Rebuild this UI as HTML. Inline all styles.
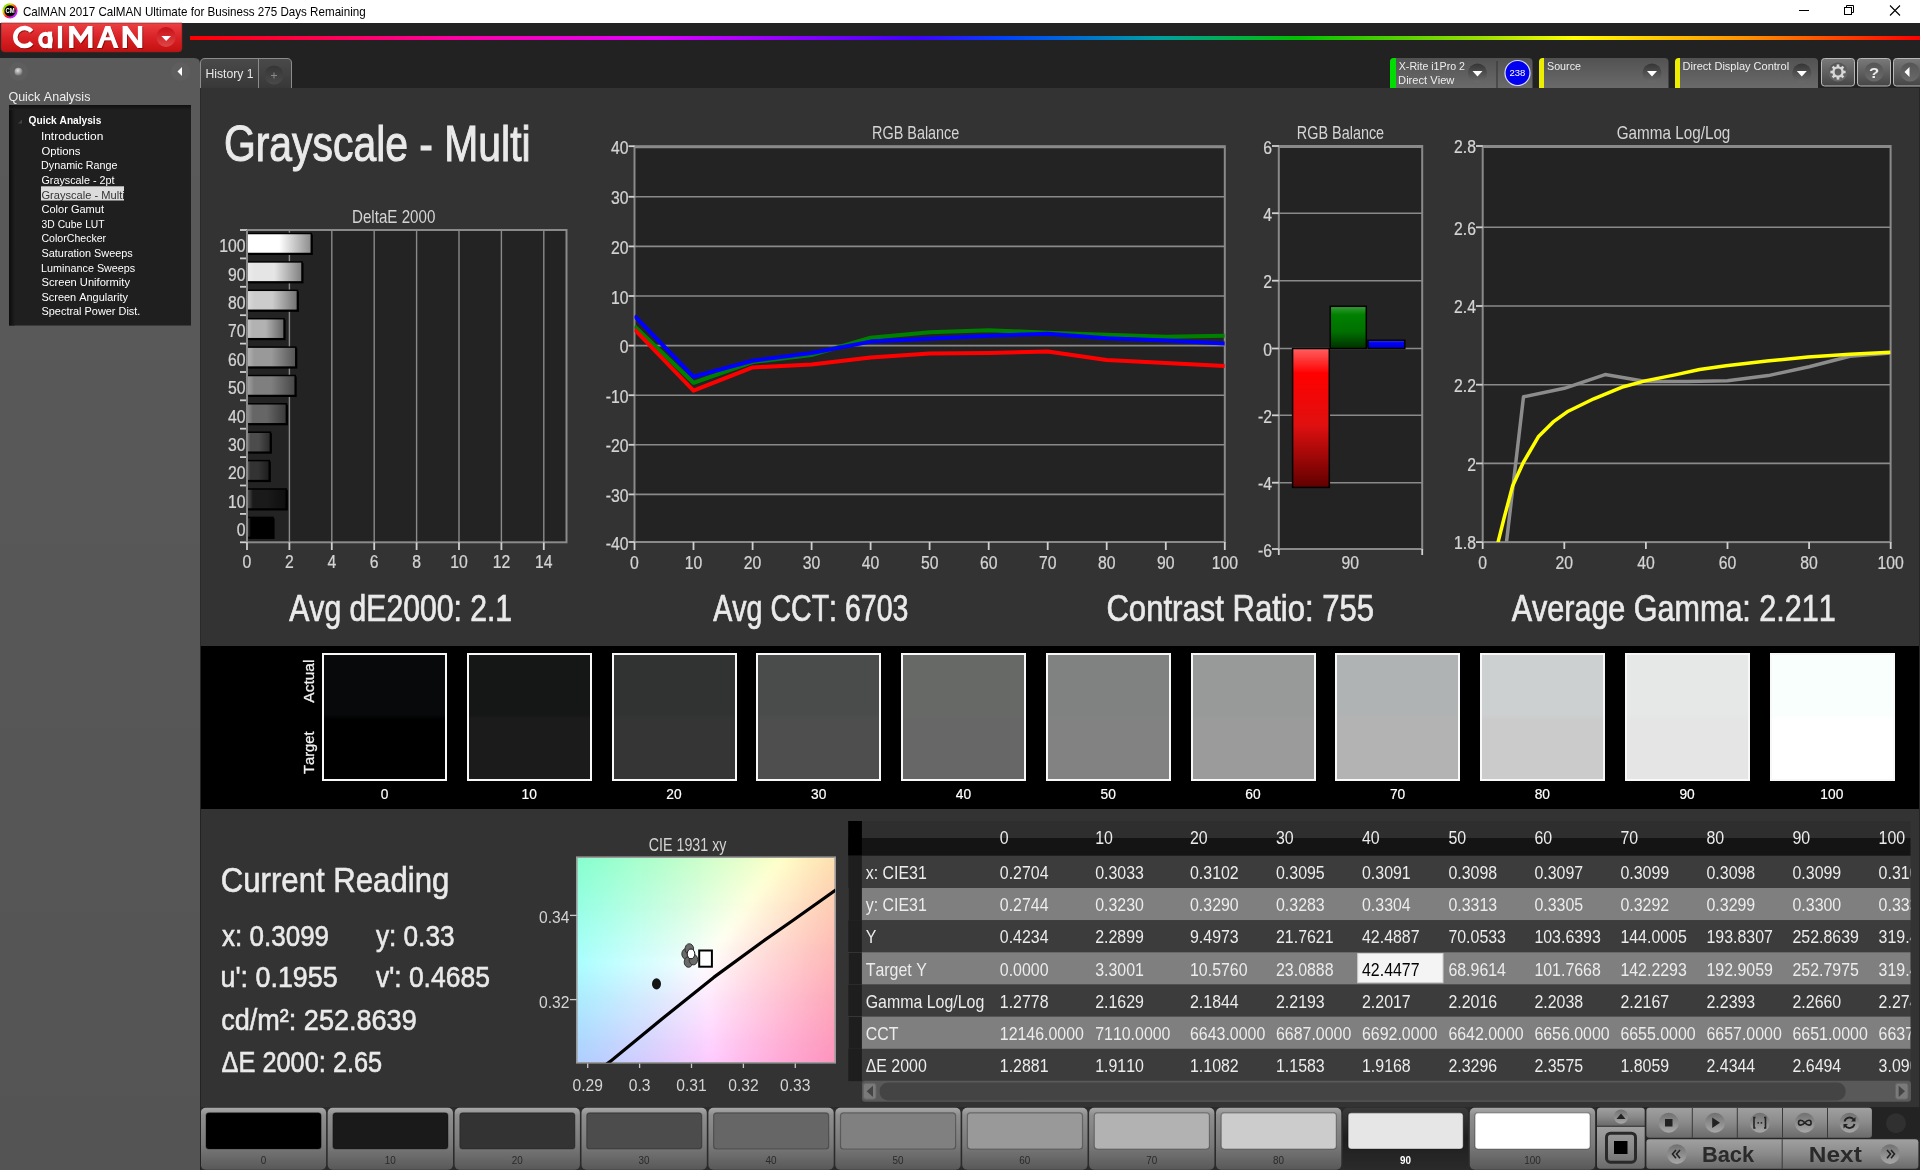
<!DOCTYPE html>
<html><head><meta charset="utf-8"><title>CalMAN</title>
<style>html,body{margin:0;padding:0;background:#222;overflow:hidden}svg{display:block;will-change:transform}text{font-family:"Liberation Sans",sans-serif;font-kerning:none}</style>
</head><body>
<svg width="1920" height="1170" viewBox="0 0 1920 1170" font-family="Liberation Sans, sans-serif">
<defs><linearGradient id="g1" x1="0" y1="0" x2="1" y2="1"><stop offset="0" stop-color="#00e000"/><stop offset="0.3" stop-color="#e0e000"/><stop offset="0.55" stop-color="#ff2020"/><stop offset="0.8" stop-color="#c020ff"/><stop offset="1" stop-color="#00c0ff"/></linearGradient><linearGradient id="g2" x1="0" y1="0" x2="0" y2="1"><stop offset="0" stop-color="#ec4144"/><stop offset="0.5" stop-color="#d92226"/><stop offset="1" stop-color="#c41010"/></linearGradient><linearGradient id="g3" x1="0" y1="0" x2="0" y2="1"><stop offset="0" stop-color="#c80f18"/><stop offset="1" stop-color="#e04545"/></linearGradient><linearGradient id="g4" x1="0" y1="0" x2="1" y2="0"><stop offset="0" stop-color="#ff0000"/><stop offset="0.15" stop-color="#ff00a0"/><stop offset="0.27" stop-color="#e000ff"/><stop offset="0.42" stop-color="#4000ff"/><stop offset="0.47" stop-color="#0040ff"/><stop offset="0.56" stop-color="#00a0a0"/><stop offset="0.64" stop-color="#00c000"/><stop offset="0.75" stop-color="#a0e000"/><stop offset="0.8" stop-color="#ffff00"/><stop offset="0.9" stop-color="#ff9000"/><stop offset="1" stop-color="#ff0000"/></linearGradient><linearGradient id="g5" x1="0" y1="0" x2="0" y2="1"><stop offset="0" stop-color="#5a5a5a"/><stop offset="1" stop-color="#545454"/></linearGradient><radialGradient id="g6" cx="0.42" cy="0.35" r="0.65"><stop offset="0" stop-color="#e0e0e0"/><stop offset="0.5" stop-color="#a8a8a8"/><stop offset="1" stop-color="#6e6e6e"/></radialGradient><radialGradient id="g7" cx="0.5" cy="0.5" r="0.5"><stop offset="0" stop-color="#5a5a5a"/><stop offset="0.7" stop-color="#5c5c5c"/><stop offset="1" stop-color="#575757"/></radialGradient><linearGradient id="g8" x1="0" y1="0" x2="1" y2="0"><stop offset="0" stop-color="#0c0c0c"/><stop offset="1" stop-color="#1f1f1f"/></linearGradient><linearGradient id="g9" x1="0" y1="0" x2="0" y2="1"><stop offset="0" stop-color="#0c0c0c"/><stop offset="1" stop-color="#1f1f1f"/></linearGradient><linearGradient id="g10" x1="0" y1="0" x2="0" y2="1"><stop offset="0" stop-color="#4a4a4a"/><stop offset="1" stop-color="#383838"/></linearGradient><linearGradient id="g11" x1="0" y1="0" x2="0" y2="1"><stop offset="0" stop-color="#353535"/><stop offset="1" stop-color="#4a4a4a"/></linearGradient><linearGradient id="g12" x1="0" y1="0" x2="0" y2="1"><stop offset="0" stop-color="#525252"/><stop offset="1" stop-color="#6a6a6a"/></linearGradient><linearGradient id="g13" x1="0" y1="0" x2="0" y2="1"><stop offset="0" stop-color="#353535"/><stop offset="1" stop-color="#6a6a6a"/></linearGradient><linearGradient id="g14" x1="0" y1="0" x2="0" y2="1"><stop offset="0" stop-color="#353535"/><stop offset="1" stop-color="#6a6a6a"/></linearGradient><linearGradient id="g15" x1="0" y1="0" x2="0" y2="1"><stop offset="0" stop-color="#353535"/><stop offset="1" stop-color="#6a6a6a"/></linearGradient><linearGradient id="g16" x1="0" y1="0" x2="0" y2="1"><stop offset="0" stop-color="#7a7a7a"/><stop offset="1" stop-color="#454545"/></linearGradient><linearGradient id="g17" x1="0" y1="0" x2="0" y2="1"><stop offset="0" stop-color="#555"/><stop offset="1" stop-color="#6a6a6a"/></linearGradient><linearGradient id="g18" x1="0" y1="0" x2="0" y2="1"><stop offset="0" stop-color="#555"/><stop offset="1" stop-color="#6a6a6a"/></linearGradient><linearGradient id="g19" x1="0" y1="0" x2="0" y2="1"><stop offset="0" stop-color="#555"/><stop offset="1" stop-color="#6a6a6a"/></linearGradient><linearGradient id="g20" x1="0" y1="0" x2="1" y2="0"><stop offset="0" stop-color="#ffffff"/><stop offset="0.15" stop-color="#ffffff"/><stop offset="0.5" stop-color="#ffffff"/><stop offset="1" stop-color="#8c8c8c"/></linearGradient><linearGradient id="g21" x1="0" y1="0" x2="1" y2="0"><stop offset="0" stop-color="#ececec"/><stop offset="0.15" stop-color="#e5e5e5"/><stop offset="0.5" stop-color="#e5e5e5"/><stop offset="1" stop-color="#7e7e7e"/></linearGradient><linearGradient id="g22" x1="0" y1="0" x2="1" y2="0"><stop offset="0" stop-color="#dadada"/><stop offset="0.15" stop-color="#cccccc"/><stop offset="0.5" stop-color="#cccccc"/><stop offset="1" stop-color="#707070"/></linearGradient><linearGradient id="g23" x1="0" y1="0" x2="1" y2="0"><stop offset="0" stop-color="#c7c7c7"/><stop offset="0.15" stop-color="#b2b2b2"/><stop offset="0.5" stop-color="#b2b2b2"/><stop offset="1" stop-color="#626262"/></linearGradient><linearGradient id="g24" x1="0" y1="0" x2="1" y2="0"><stop offset="0" stop-color="#b5b5b5"/><stop offset="0.15" stop-color="#999999"/><stop offset="0.5" stop-color="#999999"/><stop offset="1" stop-color="#545454"/></linearGradient><linearGradient id="g25" x1="0" y1="0" x2="1" y2="0"><stop offset="0" stop-color="#a2a2a2"/><stop offset="0.15" stop-color="#7f7f7f"/><stop offset="0.5" stop-color="#7f7f7f"/><stop offset="1" stop-color="#464646"/></linearGradient><linearGradient id="g26" x1="0" y1="0" x2="1" y2="0"><stop offset="0" stop-color="#909090"/><stop offset="0.15" stop-color="#666666"/><stop offset="0.5" stop-color="#666666"/><stop offset="1" stop-color="#383838"/></linearGradient><linearGradient id="g27" x1="0" y1="0" x2="1" y2="0"><stop offset="0" stop-color="#7d7d7d"/><stop offset="0.15" stop-color="#4c4c4c"/><stop offset="0.5" stop-color="#4c4c4c"/><stop offset="1" stop-color="#2a2a2a"/></linearGradient><linearGradient id="g28" x1="0" y1="0" x2="1" y2="0"><stop offset="0" stop-color="#6b6b6b"/><stop offset="0.15" stop-color="#333333"/><stop offset="0.5" stop-color="#333333"/><stop offset="1" stop-color="#1c1c1c"/></linearGradient><linearGradient id="g29" x1="0" y1="0" x2="1" y2="0"><stop offset="0" stop-color="#595959"/><stop offset="0.15" stop-color="#1a1a1a"/><stop offset="0.5" stop-color="#1a1a1a"/><stop offset="1" stop-color="#0e0e0e"/></linearGradient><linearGradient id="g30" x1="0" y1="0" x2="1" y2="0"><stop offset="0" stop-color="#464646"/><stop offset="0.15" stop-color="#000000"/><stop offset="0.5" stop-color="#000000"/><stop offset="1" stop-color="#000000"/></linearGradient><linearGradient id="g31" x1="0" y1="0" x2="0" y2="1"><stop offset="0" stop-color="#ff6060"/><stop offset="0.18" stop-color="#ff0000"/><stop offset="0.55" stop-color="#e01010"/><stop offset="1" stop-color="#600000"/></linearGradient><linearGradient id="g32" x1="0" y1="0" x2="0" y2="1"><stop offset="0" stop-color="#3a9a3a"/><stop offset="0.2" stop-color="#008000"/><stop offset="0.6" stop-color="#007000"/><stop offset="1" stop-color="#003000"/></linearGradient><linearGradient id="g33" x1="0" y1="0" x2="0" y2="1"><stop offset="0" stop-color="#4040ff"/><stop offset="0.3" stop-color="#0000ff"/><stop offset="1" stop-color="#0000c0"/></linearGradient><linearGradient id="g34" x1="0" y1="0" x2="0" y2="1"><stop offset="0" stop-color="#08090b"/><stop offset="0.48" stop-color="#08090b"/><stop offset="0.52" stop-color="#000000"/><stop offset="1" stop-color="#000000"/></linearGradient><linearGradient id="g35" x1="0" y1="0" x2="0" y2="1"><stop offset="0" stop-color="#151716"/><stop offset="0.48" stop-color="#151716"/><stop offset="0.52" stop-color="#1b1b1b"/><stop offset="1" stop-color="#1b1b1b"/></linearGradient><linearGradient id="g36" x1="0" y1="0" x2="0" y2="1"><stop offset="0" stop-color="#313332"/><stop offset="0.48" stop-color="#313332"/><stop offset="0.52" stop-color="#353535"/><stop offset="1" stop-color="#353535"/></linearGradient><linearGradient id="g37" x1="0" y1="0" x2="0" y2="1"><stop offset="0" stop-color="#4a4c4b"/><stop offset="0.48" stop-color="#4a4c4b"/><stop offset="0.52" stop-color="#4e4e4e"/><stop offset="1" stop-color="#4e4e4e"/></linearGradient><linearGradient id="g38" x1="0" y1="0" x2="0" y2="1"><stop offset="0" stop-color="#676967"/><stop offset="0.48" stop-color="#676967"/><stop offset="0.52" stop-color="#676767"/><stop offset="1" stop-color="#676767"/></linearGradient><linearGradient id="g39" x1="0" y1="0" x2="0" y2="1"><stop offset="0" stop-color="#7f8281"/><stop offset="0.48" stop-color="#7f8281"/><stop offset="0.52" stop-color="#828282"/><stop offset="1" stop-color="#828282"/></linearGradient><linearGradient id="g40" x1="0" y1="0" x2="0" y2="1"><stop offset="0" stop-color="#979a99"/><stop offset="0.48" stop-color="#979a99"/><stop offset="0.52" stop-color="#9b9b9b"/><stop offset="1" stop-color="#9b9b9b"/></linearGradient><linearGradient id="g41" x1="0" y1="0" x2="0" y2="1"><stop offset="0" stop-color="#b0b3b3"/><stop offset="0.48" stop-color="#b0b3b3"/><stop offset="0.52" stop-color="#b3b3b3"/><stop offset="1" stop-color="#b3b3b3"/></linearGradient><linearGradient id="g42" x1="0" y1="0" x2="0" y2="1"><stop offset="0" stop-color="#cdd0d0"/><stop offset="0.48" stop-color="#cdd0d0"/><stop offset="0.52" stop-color="#cbcbcb"/><stop offset="1" stop-color="#cbcbcb"/></linearGradient><linearGradient id="g43" x1="0" y1="0" x2="0" y2="1"><stop offset="0" stop-color="#e5e8e7"/><stop offset="0.48" stop-color="#e5e8e7"/><stop offset="0.52" stop-color="#e5e5e5"/><stop offset="1" stop-color="#e5e5e5"/></linearGradient><linearGradient id="g44" x1="0" y1="0" x2="0" y2="1"><stop offset="0" stop-color="#f8fffd"/><stop offset="0.48" stop-color="#f8fffd"/><stop offset="0.52" stop-color="#ffffff"/><stop offset="1" stop-color="#ffffff"/></linearGradient><filter id="blur" filterUnits="userSpaceOnUse" x="540" y="820" width="330" height="280"><feGaussianBlur stdDeviation="4"/></filter><linearGradient id="g45" x1="0" y1="0" x2="0" y2="1"><stop offset="0" stop-color="#2e2e2e"/><stop offset="0.5" stop-color="#2e2e2e"/><stop offset="0.5" stop-color="#141414"/><stop offset="1" stop-color="#141414"/></linearGradient><linearGradient id="g46" x1="0" y1="0" x2="0" y2="1"><stop offset="0" stop-color="#a8a8a8"/><stop offset="0.12" stop-color="#8e8e8e"/><stop offset="0.6" stop-color="#7a7a7a"/><stop offset="1" stop-color="#585858"/></linearGradient><linearGradient id="g47" x1="0" y1="0" x2="0" y2="1"><stop offset="0" stop-color="#3a3a3a"/><stop offset="0.5" stop-color="#1e1e1e"/><stop offset="1" stop-color="#2a2a2a"/></linearGradient><linearGradient id="g48" x1="0" y1="0" x2="0" y2="1"><stop offset="0" stop-color="#a0a0a0"/><stop offset="0.5" stop-color="#8a8a8a"/><stop offset="1" stop-color="#6a6a6a"/></linearGradient><linearGradient id="g49" x1="0" y1="0" x2="0" y2="1"><stop offset="0" stop-color="#707070"/><stop offset="1" stop-color="#a8a8a8"/></linearGradient></defs>
<rect x="0" y="0" width="1920" height="1170" fill="#222222"/>
<rect x="0" y="0" width="1920" height="23" fill="#ffffff"/>
<rect x="200" y="88" width="1720" height="1082" fill="#333333"/>
<circle cx="10" cy="10.9" r="7.6" fill="url(#g1)"/>
<circle cx="10" cy="10.9" r="5.6" fill="#000"/>
<text transform="translate(5.51,13.20) scale(0.9036,1)" font-size="6.5" fill="#fff" font-weight="bold">CM</text>
<text transform="translate(22.91,15.60) scale(0.9695,1)" font-size="12" fill="#000">CalMAN 2017 CalMAN Ultimate for Business 275 Days Remaining</text>
<line x1="1799" y1="10.5" x2="1809" y2="10.5" stroke="#000" stroke-width="1"/>
<rect x="1844.5" y="7.5" width="7" height="7" fill="none" stroke="#000" stroke-width="1"/>
<path d="M1846.5 7.5 V5.5 H1853.5 V12.5 H1851.5" fill="none" stroke="#000" stroke-width="1"/>
<path d="M1890 5.5 L1900 15.5 M1900 5.5 L1890 15.5" stroke="#000" stroke-width="1.1"/>
<path d="M1 23 H182 V48 Q182 52 178 52 H5 Q1 52 1 48 Z" fill="url(#g2)" stroke="#7a2a2a" stroke-width="0.6"/>
<g transform="translate(0.9,0.9)" fill="#5a0000" stroke="#5a0000" opacity="0.55"><path d="M31.6 31.4 A9.2 9 0 1 0 31.6 42.8" fill="none" stroke-width="4.5"/><ellipse cx="45.5" cy="40.05" rx="5.2" ry="6.1" fill="none" stroke-width="4.2"/><rect x="47.8" y="31.6" width="4.4" height="16.7" stroke="none"/><rect x="57.9" y="25.9" width="4.3" height="22.4" stroke="none"/><path d="M69.1 48.1 V26.1 H73.9 L80.8 36.3 L87.7 26.1 H92.5 V48.1 H88.1 V33.6 L80.8 43.6 L73.5 33.6 V48.1 Z" stroke="none"/><path d="M96.9 48.1 L105.3 26.1 H110.3 L118.6 48.1 H113.9 L107.8 31.6 L101.6 48.1 Z" stroke="none"/><rect x="102" y="37.2" width="11.6" height="3.2" stroke="none"/><path d="M122.6 48.1 V26.1 H127.3 L137.9 40.6 V26.1 H142.3 V48.1 H137.6 L127 33.7 V48.1 Z" stroke="none"/></g>
<g fill="#ffffff" stroke="#ffffff"><path d="M31.6 31.4 A9.2 9 0 1 0 31.6 42.8" fill="none" stroke-width="4.5"/><ellipse cx="45.5" cy="40.05" rx="5.2" ry="6.1" fill="none" stroke-width="4.2"/><rect x="47.8" y="31.6" width="4.4" height="16.7" stroke="none"/><rect x="57.9" y="25.9" width="4.3" height="22.4" stroke="none"/><path d="M69.1 48.1 V26.1 H73.9 L80.8 36.3 L87.7 26.1 H92.5 V48.1 H88.1 V33.6 L80.8 43.6 L73.5 33.6 V48.1 Z" stroke="none"/><path d="M96.9 48.1 L105.3 26.1 H110.3 L118.6 48.1 H113.9 L107.8 31.6 L101.6 48.1 Z" stroke="none"/><rect x="102" y="37.2" width="11.6" height="3.2" stroke="none"/><path d="M122.6 48.1 V26.1 H127.3 L137.9 40.6 V26.1 H142.3 V48.1 H137.6 L127 33.7 V48.1 Z" stroke="none"/></g>
<ellipse cx="166" cy="36.9" rx="9.6" ry="10" fill="url(#g3)"/>
<path d="M161.4 36 H171 L166.2 40.9 Z" fill="#fff"/>
<rect x="190" y="36" width="1730" height="4" fill="url(#g4)"/>
<path d="M0 58 H194 Q200 58 200 64 V1170 H0 Z" fill="url(#g5)"/>
<circle cx="18.5" cy="71.5" r="9.5" fill="#5e5e5e"/>
<circle cx="18.5" cy="71.7" r="4" fill="url(#g6)"/>
<circle cx="180.5" cy="71.5" r="9.5" fill="#5e5e5e"/>
<path d="M177.5 71.5 L182 67 V76 Z" fill="#ffffff"/>
<text transform="translate(8.41,101.00) scale(0.9624,1)" font-size="13" fill="#eeeeee">Quick Analysis</text>
<rect x="9" y="105" width="182" height="220.5" fill="#1f1f1f"/>
<rect x="9" y="105" width="6" height="220.5" fill="url(#g8)"/>
<rect x="9" y="105" width="182" height="5" fill="url(#g9)" opacity="0.8"/>
<path d="M18 123.5 L22 119.5 V123.5 Z" fill="#444"/>
<text transform="translate(28.58,123.80) scale(0.8833,1)" font-size="11.5" fill="#ffffff" font-weight="bold">Quick Analysis</text>
<text transform="translate(40.90,140.20) scale(1.0380,1)" font-size="11.5" fill="#ffffff">Introduction</text>
<text transform="translate(41.46,154.80) scale(0.9826,1)" font-size="11.5" fill="#ffffff">Options</text>
<text transform="translate(41.12,169.40) scale(0.9333,1)" font-size="11.5" fill="#ffffff">Dynamic Range</text>
<text transform="translate(41.46,184.00) scale(0.9378,1)" font-size="11.5" fill="#ffffff">Grayscale - 2pt</text>
<rect x="41" y="186.3" width="83" height="14.2" fill="#dcdcdc"/>
<text transform="translate(41.44,198.60) scale(0.9657,1)" font-size="11.5" fill="#333333">Grayscale - Multi</text>
<text transform="translate(41.44,213.20) scale(0.9610,1)" font-size="11.5" fill="#ffffff">Color Gamut</text>
<text transform="translate(41.61,227.80) scale(0.8979,1)" font-size="11.5" fill="#ffffff">3D Cube LUT</text>
<text transform="translate(41.46,242.40) scale(0.9205,1)" font-size="11.5" fill="#ffffff">ColorChecker</text>
<text transform="translate(41.51,257.00) scale(0.9467,1)" font-size="11.5" fill="#ffffff">Saturation Sweeps</text>
<text transform="translate(41.11,271.60) scale(0.9393,1)" font-size="11.5" fill="#ffffff">Luminance Sweeps</text>
<text transform="translate(41.49,286.20) scale(0.9687,1)" font-size="11.5" fill="#ffffff">Screen Uniformity</text>
<text transform="translate(41.50,300.80) scale(0.9532,1)" font-size="11.5" fill="#ffffff">Screen Angularity</text>
<text transform="translate(41.50,315.40) scale(0.9503,1)" font-size="11.5" fill="#ffffff">Spectral Power Dist.</text>
<path d="M200.5 88 V63 Q200.5 58.5 205 58.5 H287 Q291.5 58.5 291.5 63 V88" fill="url(#g10)" stroke="#8c8c8c" stroke-width="1"/>
<line x1="258.5" y1="59" x2="258.5" y2="88" stroke="#8c8c8c" stroke-width="1"/>
<text transform="translate(205.50,77.80) scale(1.0159,1)" font-size="12" fill="#e8e8e8">History 1</text>
<circle cx="274" cy="75" r="9.5" fill="url(#g11)"/>
<path d="M271 75.5 H277 M274 72.5 V78.5" stroke="#8a8a8a" stroke-width="1"/>
<path d="M1390 88 V62 Q1390 58 1394 58 H1528.5 Q1532.5 58 1532.5 62 V88 Z" fill="url(#g12)"/>
<path d="M1390 88 V62 Q1390 58 1394 58 H1396 V88 Z" fill="#00dd00"/>
<text transform="translate(1398.76,70.00) scale(0.9679,1)" font-size="11" fill="#eeeeee">X-Rite i1Pro 2</text>
<text transform="translate(1398.09,83.70) scale(1.0137,1)" font-size="11" fill="#eeeeee">Direct View</text>
<circle cx="1477.5" cy="73" r="9.5" fill="url(#g13)"/>
<path d="M1472.5 71 H1482.5 L1477.5 76.5 Z" fill="#fff"/>
<line x1="1497" y1="61" x2="1497" y2="88" stroke="#3a3a3a" stroke-width="1.2"/>
<circle cx="1517.5" cy="73" r="12.5" fill="#0000ee" stroke="#dcdcff" stroke-width="1.2"/>
<text transform="translate(1509.52,76.30) scale(1.0584,1)" font-size="9" fill="#ffffff">238</text>
<path d="M1539 88 V62 Q1539 58 1543 58 H1664.5 Q1668.5 58 1668.5 62 V88 Z" fill="url(#g12)"/>
<path d="M1539 88 V62 Q1539 58 1543 58 H1544 V88 Z" fill="#eeee00"/>
<text transform="translate(1547.01,70.00) scale(0.9745,1)" font-size="11" fill="#eeeeee">Source</text>
<circle cx="1652" cy="73" r="9.5" fill="url(#g14)"/>
<path d="M1647 71 H1657 L1652 76.5 Z" fill="#fff"/>
<path d="M1675 88 V62 Q1675 58 1679 58 H1814 Q1818 58 1818 62 V88 Z" fill="url(#g12)"/>
<path d="M1675 88 V62 Q1675 58 1679 58 H1680 V88 Z" fill="#eeee00"/>
<text transform="translate(1682.60,70.00) scale(1.0026,1)" font-size="11" fill="#eeeeee">Direct Display Control</text>
<circle cx="1801.8" cy="73" r="9.5" fill="url(#g15)"/>
<path d="M1796.8 71 H1806.8 L1801.8 76.5 Z" fill="#fff"/>
<rect x="1821.5" y="58.5" width="33" height="27.5" rx="3" fill="url(#g16)" stroke="#b8b8b8" stroke-width="1"/>
<circle cx="1838" cy="72" r="9.6" fill="url(#g17)"/>
<rect x="1857.5" y="58.5" width="33" height="27.5" rx="3" fill="url(#g16)" stroke="#b8b8b8" stroke-width="1"/>
<circle cx="1874" cy="72" r="9.6" fill="url(#g18)"/>
<rect x="1893.5" y="58.5" width="33" height="27.5" rx="3" fill="url(#g16)" stroke="#b8b8b8" stroke-width="1"/>
<circle cx="1910" cy="72" r="9.6" fill="url(#g19)"/>
<rect x="1836.7" y="64.4" width="2.6" height="3.4" fill="#d8d8d8" transform="rotate(0 1838 72)"/><rect x="1836.7" y="64.4" width="2.6" height="3.4" fill="#d8d8d8" transform="rotate(45 1838 72)"/><rect x="1836.7" y="64.4" width="2.6" height="3.4" fill="#d8d8d8" transform="rotate(90 1838 72)"/><rect x="1836.7" y="64.4" width="2.6" height="3.4" fill="#d8d8d8" transform="rotate(135 1838 72)"/><rect x="1836.7" y="64.4" width="2.6" height="3.4" fill="#d8d8d8" transform="rotate(180 1838 72)"/><rect x="1836.7" y="64.4" width="2.6" height="3.4" fill="#d8d8d8" transform="rotate(225 1838 72)"/><rect x="1836.7" y="64.4" width="2.6" height="3.4" fill="#d8d8d8" transform="rotate(270 1838 72)"/><rect x="1836.7" y="64.4" width="2.6" height="3.4" fill="#d8d8d8" transform="rotate(315 1838 72)"/>
<circle cx="1838" cy="72" r="4.6" fill="none" stroke="#d8d8d8" stroke-width="2.4"/>
<text transform="translate(1868.98,77.50) scale(1.1170,1)" font-size="15" fill="#eeeeee" font-weight="bold">?</text>
<path d="M1904.5 72 L1909.5 67 V77 Z" fill="#ffffff"/>
<text transform="translate(223.94,161.40) scale(0.8180,1)" font-size="50" fill="#eaeaea" stroke="#eaeaea" stroke-width="1.0">Grayscale - Multi</text>
<text transform="translate(352.01,223.30) scale(0.8652,1)" font-size="17.5" fill="#d4d4d4">DeltaE 2000</text>
<rect x="247" y="230" width="319.5" height="312.29999999999995" fill="#232323"/>
<line x1="289.4" y1="230" x2="289.4" y2="542.3" stroke="#8a8a8a" stroke-width="1.4"/>
<line x1="331.8" y1="230" x2="331.8" y2="542.3" stroke="#8a8a8a" stroke-width="1.4"/>
<line x1="374.2" y1="230" x2="374.2" y2="542.3" stroke="#8a8a8a" stroke-width="1.4"/>
<line x1="416.6" y1="230" x2="416.6" y2="542.3" stroke="#8a8a8a" stroke-width="1.4"/>
<line x1="459.0" y1="230" x2="459.0" y2="542.3" stroke="#8a8a8a" stroke-width="1.4"/>
<line x1="501.4" y1="230" x2="501.4" y2="542.3" stroke="#8a8a8a" stroke-width="1.4"/>
<line x1="543.8" y1="230" x2="543.8" y2="542.3" stroke="#8a8a8a" stroke-width="1.4"/>
<rect x="247" y="230" width="319.5" height="312.29999999999995" fill="none" stroke="#8a8a8a" stroke-width="2"/>
<line x1="240" y1="230.0" x2="247" y2="230.0" stroke="#d0d0d0" stroke-width="1.8"/>
<line x1="240" y1="258.4" x2="247" y2="258.4" stroke="#d0d0d0" stroke-width="1.8"/>
<line x1="240" y1="286.8" x2="247" y2="286.8" stroke="#d0d0d0" stroke-width="1.8"/>
<line x1="240" y1="315.2" x2="247" y2="315.2" stroke="#d0d0d0" stroke-width="1.8"/>
<line x1="240" y1="343.6" x2="247" y2="343.6" stroke="#d0d0d0" stroke-width="1.8"/>
<line x1="240" y1="372.0" x2="247" y2="372.0" stroke="#d0d0d0" stroke-width="1.8"/>
<line x1="240" y1="400.3" x2="247" y2="400.3" stroke="#d0d0d0" stroke-width="1.8"/>
<line x1="240" y1="428.7" x2="247" y2="428.7" stroke="#d0d0d0" stroke-width="1.8"/>
<line x1="240" y1="457.1" x2="247" y2="457.1" stroke="#d0d0d0" stroke-width="1.8"/>
<line x1="240" y1="485.5" x2="247" y2="485.5" stroke="#d0d0d0" stroke-width="1.8"/>
<line x1="240" y1="513.9" x2="247" y2="513.9" stroke="#d0d0d0" stroke-width="1.8"/>
<line x1="240" y1="542.3" x2="247" y2="542.3" stroke="#d0d0d0" stroke-width="1.8"/>
<rect x="248.5" y="234.5" width="64.3" height="20.5" fill="#000"/>
<rect x="247" y="233.5" width="64.3" height="20" fill="url(#g20)" stroke="#000" stroke-width="1.5"/>
<text transform="translate(245.50,252.20) scale(0.9000,1)" font-size="17.5" fill="#d4d4d4" text-anchor="end" stroke="#d4d4d4" stroke-width="0.25">100</text>
<rect x="248.5" y="262.9" width="55.0" height="20.5" fill="#000"/>
<rect x="247" y="261.9" width="55.0" height="20" fill="url(#g21)" stroke="#000" stroke-width="1.5"/>
<text transform="translate(245.50,280.59) scale(0.9000,1)" font-size="17.5" fill="#d4d4d4" text-anchor="end" stroke="#d4d4d4" stroke-width="0.25">90</text>
<rect x="248.5" y="291.3" width="50.4" height="20.5" fill="#000"/>
<rect x="247" y="290.3" width="50.4" height="20" fill="url(#g22)" stroke="#000" stroke-width="1.5"/>
<text transform="translate(245.50,308.98) scale(0.9000,1)" font-size="17.5" fill="#d4d4d4" text-anchor="end" stroke="#d4d4d4" stroke-width="0.25">80</text>
<rect x="248.5" y="319.7" width="37.1" height="20.5" fill="#000"/>
<rect x="247" y="318.7" width="37.1" height="20" fill="url(#g23)" stroke="#000" stroke-width="1.5"/>
<text transform="translate(245.50,337.37) scale(0.9000,1)" font-size="17.5" fill="#d4d4d4" text-anchor="end" stroke="#d4d4d4" stroke-width="0.25">70</text>
<rect x="248.5" y="348.1" width="48.8" height="20.5" fill="#000"/>
<rect x="247" y="347.1" width="48.8" height="20" fill="url(#g24)" stroke="#000" stroke-width="1.5"/>
<text transform="translate(245.50,365.76) scale(0.9000,1)" font-size="17.5" fill="#d4d4d4" text-anchor="end" stroke="#d4d4d4" stroke-width="0.25">60</text>
<rect x="248.5" y="376.5" width="48.2" height="20.5" fill="#000"/>
<rect x="247" y="375.5" width="48.2" height="20" fill="url(#g25)" stroke="#000" stroke-width="1.5"/>
<text transform="translate(245.50,394.15) scale(0.9000,1)" font-size="17.5" fill="#d4d4d4" text-anchor="end" stroke="#d4d4d4" stroke-width="0.25">50</text>
<rect x="248.5" y="404.8" width="39.4" height="20.5" fill="#000"/>
<rect x="247" y="403.8" width="39.4" height="20" fill="url(#g26)" stroke="#000" stroke-width="1.5"/>
<text transform="translate(245.50,422.54) scale(0.9000,1)" font-size="17.5" fill="#d4d4d4" text-anchor="end" stroke="#d4d4d4" stroke-width="0.25">40</text>
<rect x="248.5" y="433.2" width="23.4" height="20.5" fill="#000"/>
<rect x="247" y="432.2" width="23.4" height="20" fill="url(#g27)" stroke="#000" stroke-width="1.5"/>
<text transform="translate(245.50,450.93) scale(0.9000,1)" font-size="17.5" fill="#d4d4d4" text-anchor="end" stroke="#d4d4d4" stroke-width="0.25">30</text>
<rect x="248.5" y="461.6" width="22.3" height="20.5" fill="#000"/>
<rect x="247" y="460.6" width="22.3" height="20" fill="url(#g28)" stroke="#000" stroke-width="1.5"/>
<text transform="translate(245.50,479.32) scale(0.9000,1)" font-size="17.5" fill="#d4d4d4" text-anchor="end" stroke="#d4d4d4" stroke-width="0.25">20</text>
<rect x="248.5" y="490.0" width="39.3" height="20.5" fill="#000"/>
<rect x="247" y="489.0" width="39.3" height="20" fill="url(#g29)" stroke="#000" stroke-width="1.5"/>
<text transform="translate(245.50,507.71) scale(0.9000,1)" font-size="17.5" fill="#d4d4d4" text-anchor="end" stroke="#d4d4d4" stroke-width="0.25">10</text>
<rect x="248.5" y="518.4" width="26.1" height="20.5" fill="#000"/>
<rect x="247" y="517.4" width="26.1" height="20" fill="url(#g30)" stroke="#000" stroke-width="1.5"/>
<text transform="translate(245.50,536.10) scale(0.9000,1)" font-size="17.5" fill="#d4d4d4" text-anchor="end" stroke="#d4d4d4" stroke-width="0.25">0</text>
<line x1="247" y1="230" x2="247" y2="542.3" stroke="#8a8a8a" stroke-width="2"/>
<line x1="247.0" y1="542.3" x2="247.0" y2="550" stroke="#d0d0d0" stroke-width="1.8"/>
<text transform="translate(247.00,568.00) scale(0.9000,1)" font-size="17.5" fill="#d4d4d4" text-anchor="middle" stroke="#d4d4d4" stroke-width="0.25">0</text>
<line x1="289.4" y1="542.3" x2="289.4" y2="550" stroke="#d0d0d0" stroke-width="1.8"/>
<text transform="translate(289.40,568.00) scale(0.9000,1)" font-size="17.5" fill="#d4d4d4" text-anchor="middle" stroke="#d4d4d4" stroke-width="0.25">2</text>
<line x1="331.8" y1="542.3" x2="331.8" y2="550" stroke="#d0d0d0" stroke-width="1.8"/>
<text transform="translate(331.80,568.00) scale(0.9000,1)" font-size="17.5" fill="#d4d4d4" text-anchor="middle" stroke="#d4d4d4" stroke-width="0.25">4</text>
<line x1="374.2" y1="542.3" x2="374.2" y2="550" stroke="#d0d0d0" stroke-width="1.8"/>
<text transform="translate(374.20,568.00) scale(0.9000,1)" font-size="17.5" fill="#d4d4d4" text-anchor="middle" stroke="#d4d4d4" stroke-width="0.25">6</text>
<line x1="416.6" y1="542.3" x2="416.6" y2="550" stroke="#d0d0d0" stroke-width="1.8"/>
<text transform="translate(416.60,568.00) scale(0.9000,1)" font-size="17.5" fill="#d4d4d4" text-anchor="middle" stroke="#d4d4d4" stroke-width="0.25">8</text>
<line x1="459.0" y1="542.3" x2="459.0" y2="550" stroke="#d0d0d0" stroke-width="1.8"/>
<text transform="translate(459.00,568.00) scale(0.9000,1)" font-size="17.5" fill="#d4d4d4" text-anchor="middle" stroke="#d4d4d4" stroke-width="0.25">10</text>
<line x1="501.4" y1="542.3" x2="501.4" y2="550" stroke="#d0d0d0" stroke-width="1.8"/>
<text transform="translate(501.40,568.00) scale(0.9000,1)" font-size="17.5" fill="#d4d4d4" text-anchor="middle" stroke="#d4d4d4" stroke-width="0.25">12</text>
<line x1="543.8" y1="542.3" x2="543.8" y2="550" stroke="#d0d0d0" stroke-width="1.8"/>
<text transform="translate(543.80,568.00) scale(0.9000,1)" font-size="17.5" fill="#d4d4d4" text-anchor="middle" stroke="#d4d4d4" stroke-width="0.25">14</text>
<text transform="translate(872.07,139.00) scale(0.8236,1)" font-size="17.5" fill="#d4d4d4">RGB Balance</text>
<rect x="634.5" y="146.2" width="590.3" height="395.8" fill="#232323"/>
<line x1="634.5" y1="494.4" x2="1224.8" y2="494.4" stroke="#8a8a8a" stroke-width="1.6"/>
<line x1="634.5" y1="444.8" x2="1224.8" y2="444.8" stroke="#8a8a8a" stroke-width="1.6"/>
<line x1="634.5" y1="395.2" x2="1224.8" y2="395.2" stroke="#8a8a8a" stroke-width="1.6"/>
<line x1="634.5" y1="345.6" x2="1224.8" y2="345.6" stroke="#8a8a8a" stroke-width="1.6"/>
<line x1="634.5" y1="296.0" x2="1224.8" y2="296.0" stroke="#8a8a8a" stroke-width="1.6"/>
<line x1="634.5" y1="246.4" x2="1224.8" y2="246.4" stroke="#8a8a8a" stroke-width="1.6"/>
<line x1="634.5" y1="196.8" x2="1224.8" y2="196.8" stroke="#8a8a8a" stroke-width="1.6"/>
<rect x="634.5" y="146.2" width="590.3" height="395.8" fill="none" stroke="#8a8a8a" stroke-width="2"/>
<line x1="634.5" y1="147.2" x2="1224.8" y2="147.2" stroke="#8a8a8a" stroke-width="2"/>
<line x1="628.5" y1="542.0" x2="634.5" y2="542.0" stroke="#d0d0d0" stroke-width="1.8"/>
<text transform="translate(628.50,549.50) scale(0.9000,1)" font-size="17.5" fill="#d4d4d4" text-anchor="end" stroke="#d4d4d4" stroke-width="0.25">-40</text>
<line x1="628.5" y1="494.4" x2="634.5" y2="494.4" stroke="#d0d0d0" stroke-width="1.8"/>
<text transform="translate(628.50,501.90) scale(0.9000,1)" font-size="17.5" fill="#d4d4d4" text-anchor="end" stroke="#d4d4d4" stroke-width="0.25">-30</text>
<line x1="628.5" y1="444.8" x2="634.5" y2="444.8" stroke="#d0d0d0" stroke-width="1.8"/>
<text transform="translate(628.50,452.30) scale(0.9000,1)" font-size="17.5" fill="#d4d4d4" text-anchor="end" stroke="#d4d4d4" stroke-width="0.25">-20</text>
<line x1="628.5" y1="395.2" x2="634.5" y2="395.2" stroke="#d0d0d0" stroke-width="1.8"/>
<text transform="translate(628.50,402.70) scale(0.9000,1)" font-size="17.5" fill="#d4d4d4" text-anchor="end" stroke="#d4d4d4" stroke-width="0.25">-10</text>
<line x1="628.5" y1="345.6" x2="634.5" y2="345.6" stroke="#d0d0d0" stroke-width="1.8"/>
<text transform="translate(628.50,353.10) scale(0.9000,1)" font-size="17.5" fill="#d4d4d4" text-anchor="end" stroke="#d4d4d4" stroke-width="0.25">0</text>
<line x1="628.5" y1="296.0" x2="634.5" y2="296.0" stroke="#d0d0d0" stroke-width="1.8"/>
<text transform="translate(628.50,303.50) scale(0.9000,1)" font-size="17.5" fill="#d4d4d4" text-anchor="end" stroke="#d4d4d4" stroke-width="0.25">10</text>
<line x1="628.5" y1="246.4" x2="634.5" y2="246.4" stroke="#d0d0d0" stroke-width="1.8"/>
<text transform="translate(628.50,253.90) scale(0.9000,1)" font-size="17.5" fill="#d4d4d4" text-anchor="end" stroke="#d4d4d4" stroke-width="0.25">20</text>
<line x1="628.5" y1="196.8" x2="634.5" y2="196.8" stroke="#d0d0d0" stroke-width="1.8"/>
<text transform="translate(628.50,204.30) scale(0.9000,1)" font-size="17.5" fill="#d4d4d4" text-anchor="end" stroke="#d4d4d4" stroke-width="0.25">30</text>
<line x1="628.5" y1="146.2" x2="634.5" y2="146.2" stroke="#d0d0d0" stroke-width="1.8"/>
<text transform="translate(628.50,153.70) scale(0.9000,1)" font-size="17.5" fill="#d4d4d4" text-anchor="end" stroke="#d4d4d4" stroke-width="0.25">40</text>
<line x1="634.5" y1="542" x2="634.5" y2="550" stroke="#d0d0d0" stroke-width="1.8"/>
<text transform="translate(634.50,569.00) scale(0.9000,1)" font-size="17.5" fill="#d4d4d4" text-anchor="middle" stroke="#d4d4d4" stroke-width="0.25">0</text>
<line x1="693.5" y1="542" x2="693.5" y2="550" stroke="#d0d0d0" stroke-width="1.8"/>
<text transform="translate(693.53,569.00) scale(0.9000,1)" font-size="17.5" fill="#d4d4d4" text-anchor="middle" stroke="#d4d4d4" stroke-width="0.25">10</text>
<line x1="752.6" y1="542" x2="752.6" y2="550" stroke="#d0d0d0" stroke-width="1.8"/>
<text transform="translate(752.56,569.00) scale(0.9000,1)" font-size="17.5" fill="#d4d4d4" text-anchor="middle" stroke="#d4d4d4" stroke-width="0.25">20</text>
<line x1="811.6" y1="542" x2="811.6" y2="550" stroke="#d0d0d0" stroke-width="1.8"/>
<text transform="translate(811.59,569.00) scale(0.9000,1)" font-size="17.5" fill="#d4d4d4" text-anchor="middle" stroke="#d4d4d4" stroke-width="0.25">30</text>
<line x1="870.6" y1="542" x2="870.6" y2="550" stroke="#d0d0d0" stroke-width="1.8"/>
<text transform="translate(870.62,569.00) scale(0.9000,1)" font-size="17.5" fill="#d4d4d4" text-anchor="middle" stroke="#d4d4d4" stroke-width="0.25">40</text>
<line x1="929.6" y1="542" x2="929.6" y2="550" stroke="#d0d0d0" stroke-width="1.8"/>
<text transform="translate(929.65,569.00) scale(0.9000,1)" font-size="17.5" fill="#d4d4d4" text-anchor="middle" stroke="#d4d4d4" stroke-width="0.25">50</text>
<line x1="988.7" y1="542" x2="988.7" y2="550" stroke="#d0d0d0" stroke-width="1.8"/>
<text transform="translate(988.68,569.00) scale(0.9000,1)" font-size="17.5" fill="#d4d4d4" text-anchor="middle" stroke="#d4d4d4" stroke-width="0.25">60</text>
<line x1="1047.7" y1="542" x2="1047.7" y2="550" stroke="#d0d0d0" stroke-width="1.8"/>
<text transform="translate(1047.71,569.00) scale(0.9000,1)" font-size="17.5" fill="#d4d4d4" text-anchor="middle" stroke="#d4d4d4" stroke-width="0.25">70</text>
<line x1="1106.7" y1="542" x2="1106.7" y2="550" stroke="#d0d0d0" stroke-width="1.8"/>
<text transform="translate(1106.74,569.00) scale(0.9000,1)" font-size="17.5" fill="#d4d4d4" text-anchor="middle" stroke="#d4d4d4" stroke-width="0.25">80</text>
<line x1="1165.8" y1="542" x2="1165.8" y2="550" stroke="#d0d0d0" stroke-width="1.8"/>
<text transform="translate(1165.77,569.00) scale(0.9000,1)" font-size="17.5" fill="#d4d4d4" text-anchor="middle" stroke="#d4d4d4" stroke-width="0.25">90</text>
<line x1="1224.8" y1="542" x2="1224.8" y2="550" stroke="#d0d0d0" stroke-width="1.8"/>
<text transform="translate(1224.80,569.00) scale(0.9000,1)" font-size="17.5" fill="#d4d4d4" text-anchor="middle" stroke="#d4d4d4" stroke-width="0.25">100</text>
<clipPath id="cq"><rect x="634.5" y="146.2" width="590.3" height="395.8"/></clipPath>
<polyline points="634.5,326.3 693.5,382.8 752.6,362.0 811.6,355.0 870.6,337.7 929.6,332.2 988.7,330.2 1047.7,332.7 1106.7,334.7 1165.8,336.7 1224.8,335.7" fill="none" stroke="#008000" stroke-width="4" stroke-linejoin="round" clip-path="url(#cq)"/>
<polyline points="634.5,315.8 693.5,376.8 752.6,360.7 811.6,353.0 870.6,341.6 929.6,338.7 988.7,335.7 1047.7,333.7 1106.7,338.2 1165.8,340.6 1224.8,343.6" fill="none" stroke="#0000ff" stroke-width="4" stroke-linejoin="round" clip-path="url(#cq)"/>
<polyline points="634.5,329.5 693.5,390.7 752.6,367.4 811.6,364.4 870.6,357.5 929.6,353.5 988.7,353.0 1047.7,351.6 1106.7,360.0 1165.8,363.0 1224.8,365.9" fill="none" stroke="#ff0000" stroke-width="4" stroke-linejoin="round" clip-path="url(#cq)"/>
<text transform="translate(1296.87,139.00) scale(0.8236,1)" font-size="17.5" fill="#d4d4d4">RGB Balance</text>
<rect x="1278.8" y="146" width="143.4000000000001" height="403" fill="#232323"/>
<line x1="1278.8" y1="213.2" x2="1422.2" y2="213.2" stroke="#8a8a8a" stroke-width="1.6"/>
<line x1="1278.8" y1="280.7" x2="1422.2" y2="280.7" stroke="#8a8a8a" stroke-width="1.6"/>
<line x1="1278.8" y1="348.5" x2="1422.2" y2="348.5" stroke="#8a8a8a" stroke-width="1.6"/>
<line x1="1278.8" y1="415.3" x2="1422.2" y2="415.3" stroke="#8a8a8a" stroke-width="1.6"/>
<line x1="1278.8" y1="482.7" x2="1422.2" y2="482.7" stroke="#8a8a8a" stroke-width="1.6"/>
<rect x="1278.8" y="146" width="143.4000000000001" height="403" fill="none" stroke="#8a8a8a" stroke-width="2"/>
<line x1="1278.8" y1="147" x2="1422.2" y2="147" stroke="#8a8a8a" stroke-width="2"/>
<line x1="1272" y1="146" x2="1278.8" y2="146" stroke="#d0d0d0" stroke-width="1.8"/>
<text transform="translate(1272.00,153.50) scale(0.9000,1)" font-size="17.5" fill="#d4d4d4" text-anchor="end" stroke="#d4d4d4" stroke-width="0.25">6</text>
<line x1="1272" y1="213.2" x2="1278.8" y2="213.2" stroke="#d0d0d0" stroke-width="1.8"/>
<text transform="translate(1272.00,220.70) scale(0.9000,1)" font-size="17.5" fill="#d4d4d4" text-anchor="end" stroke="#d4d4d4" stroke-width="0.25">4</text>
<line x1="1272" y1="280.7" x2="1278.8" y2="280.7" stroke="#d0d0d0" stroke-width="1.8"/>
<text transform="translate(1272.00,288.20) scale(0.9000,1)" font-size="17.5" fill="#d4d4d4" text-anchor="end" stroke="#d4d4d4" stroke-width="0.25">2</text>
<line x1="1272" y1="348.5" x2="1278.8" y2="348.5" stroke="#d0d0d0" stroke-width="1.8"/>
<text transform="translate(1272.00,356.00) scale(0.9000,1)" font-size="17.5" fill="#d4d4d4" text-anchor="end" stroke="#d4d4d4" stroke-width="0.25">0</text>
<line x1="1272" y1="415.3" x2="1278.8" y2="415.3" stroke="#d0d0d0" stroke-width="1.8"/>
<text transform="translate(1272.00,422.80) scale(0.9000,1)" font-size="17.5" fill="#d4d4d4" text-anchor="end" stroke="#d4d4d4" stroke-width="0.25">-2</text>
<line x1="1272" y1="482.7" x2="1278.8" y2="482.7" stroke="#d0d0d0" stroke-width="1.8"/>
<text transform="translate(1272.00,490.20) scale(0.9000,1)" font-size="17.5" fill="#d4d4d4" text-anchor="end" stroke="#d4d4d4" stroke-width="0.25">-4</text>
<line x1="1272" y1="549" x2="1278.8" y2="549" stroke="#d0d0d0" stroke-width="1.8"/>
<text transform="translate(1272.00,556.50) scale(0.9000,1)" font-size="17.5" fill="#d4d4d4" text-anchor="end" stroke="#d4d4d4" stroke-width="0.25">-6</text>
<line x1="1278.8" y1="549" x2="1278.8" y2="555" stroke="#d0d0d0" stroke-width="1.8"/>
<line x1="1422.2" y1="549" x2="1422.2" y2="555" stroke="#d0d0d0" stroke-width="1.8"/>
<text transform="translate(1350.30,568.70) scale(0.9000,1)" font-size="17.5" fill="#d4d4d4" text-anchor="middle" stroke="#d4d4d4" stroke-width="0.25">90</text>
<rect x="1292.6" y="348.5" width="36.7" height="138.9" fill="url(#g31)" stroke="#000" stroke-width="1.5"/>
<rect x="1330.3" y="306.3" width="36" height="42.2" fill="url(#g32)" stroke="#000" stroke-width="1.5"/>
<rect x="1368" y="340.3" width="36.8" height="8.2" fill="url(#g33)" stroke="#000" stroke-width="1.5"/>
<text transform="translate(1616.73,139.00) scale(0.8726,1)" font-size="17.5" fill="#d4d4d4">Gamma Log/Log</text>
<rect x="1482.7" y="146" width="407.89999999999986" height="396.1" fill="#232323"/>
<line x1="1482.7" y1="463.4" x2="1890.6" y2="463.4" stroke="#8a8a8a" stroke-width="1.6"/>
<line x1="1482.7" y1="384.7" x2="1890.6" y2="384.7" stroke="#8a8a8a" stroke-width="1.6"/>
<line x1="1482.7" y1="306.0" x2="1890.6" y2="306.0" stroke="#8a8a8a" stroke-width="1.6"/>
<line x1="1482.7" y1="227.3" x2="1890.6" y2="227.3" stroke="#8a8a8a" stroke-width="1.6"/>
<rect x="1482.7" y="146" width="407.89999999999986" height="396.1" fill="none" stroke="#8a8a8a" stroke-width="2"/>
<line x1="1482.7" y1="147" x2="1890.6" y2="147" stroke="#8a8a8a" stroke-width="2"/>
<line x1="1476" y1="542.1" x2="1482.7" y2="542.1" stroke="#d0d0d0" stroke-width="1.8"/>
<text transform="translate(1476.00,549.30) scale(0.9000,1)" font-size="17.5" fill="#d4d4d4" text-anchor="end" stroke="#d4d4d4" stroke-width="0.25">1.8</text>
<line x1="1476" y1="463.4" x2="1482.7" y2="463.4" stroke="#d0d0d0" stroke-width="1.8"/>
<text transform="translate(1476.00,470.60) scale(0.9000,1)" font-size="17.5" fill="#d4d4d4" text-anchor="end" stroke="#d4d4d4" stroke-width="0.25">2</text>
<line x1="1476" y1="384.7" x2="1482.7" y2="384.7" stroke="#d0d0d0" stroke-width="1.8"/>
<text transform="translate(1476.00,391.90) scale(0.9000,1)" font-size="17.5" fill="#d4d4d4" text-anchor="end" stroke="#d4d4d4" stroke-width="0.25">2.2</text>
<line x1="1476" y1="306.0" x2="1482.7" y2="306.0" stroke="#d0d0d0" stroke-width="1.8"/>
<text transform="translate(1476.00,313.20) scale(0.9000,1)" font-size="17.5" fill="#d4d4d4" text-anchor="end" stroke="#d4d4d4" stroke-width="0.25">2.4</text>
<line x1="1476" y1="227.3" x2="1482.7" y2="227.3" stroke="#d0d0d0" stroke-width="1.8"/>
<text transform="translate(1476.00,234.50) scale(0.9000,1)" font-size="17.5" fill="#d4d4d4" text-anchor="end" stroke="#d4d4d4" stroke-width="0.25">2.6</text>
<line x1="1476" y1="146.0" x2="1482.7" y2="146.0" stroke="#d0d0d0" stroke-width="1.8"/>
<text transform="translate(1476.00,153.20) scale(0.9000,1)" font-size="17.5" fill="#d4d4d4" text-anchor="end" stroke="#d4d4d4" stroke-width="0.25">2.8</text>
<line x1="1482.7" y1="542.1" x2="1482.7" y2="549" stroke="#d0d0d0" stroke-width="1.8"/>
<text transform="translate(1482.70,569.00) scale(0.9000,1)" font-size="17.5" fill="#d4d4d4" text-anchor="middle" stroke="#d4d4d4" stroke-width="0.25">0</text>
<line x1="1564.3" y1="542.1" x2="1564.3" y2="549" stroke="#d0d0d0" stroke-width="1.8"/>
<text transform="translate(1564.29,569.00) scale(0.9000,1)" font-size="17.5" fill="#d4d4d4" text-anchor="middle" stroke="#d4d4d4" stroke-width="0.25">20</text>
<line x1="1645.9" y1="542.1" x2="1645.9" y2="549" stroke="#d0d0d0" stroke-width="1.8"/>
<text transform="translate(1645.88,569.00) scale(0.9000,1)" font-size="17.5" fill="#d4d4d4" text-anchor="middle" stroke="#d4d4d4" stroke-width="0.25">40</text>
<line x1="1727.5" y1="542.1" x2="1727.5" y2="549" stroke="#d0d0d0" stroke-width="1.8"/>
<text transform="translate(1727.47,569.00) scale(0.9000,1)" font-size="17.5" fill="#d4d4d4" text-anchor="middle" stroke="#d4d4d4" stroke-width="0.25">60</text>
<line x1="1809.1" y1="542.1" x2="1809.1" y2="549" stroke="#d0d0d0" stroke-width="1.8"/>
<text transform="translate(1809.06,569.00) scale(0.9000,1)" font-size="17.5" fill="#d4d4d4" text-anchor="middle" stroke="#d4d4d4" stroke-width="0.25">80</text>
<line x1="1890.7" y1="542.1" x2="1890.7" y2="549" stroke="#d0d0d0" stroke-width="1.8"/>
<text transform="translate(1890.65,569.00) scale(0.9000,1)" font-size="17.5" fill="#d4d4d4" text-anchor="middle" stroke="#d4d4d4" stroke-width="0.25">100</text>
<clipPath id="cg"><rect x="1482.7" y="146" width="407.89999999999986" height="396.1"/></clipPath>
<polyline points="1482.7,745.1 1523.5,396.8 1564.3,388.3 1605.1,374.6 1645.9,381.5 1686.7,381.6 1727.5,380.7 1768.3,375.6 1809.1,366.7 1849.9,356.2 1890.7,353.1" fill="none" stroke="#8c8c8c" stroke-width="3.5" stroke-linejoin="round" clip-path="url(#cg)"/>
<polyline points="1497.0,548.0 1498.1,542.0 1504.1,518.0 1512.6,486.0 1523.3,462.5 1538.3,436.8 1553.2,421.9 1568.2,411.2 1593.8,398.8 1621.6,387.3 1645.1,380.9 1675.0,374.9 1699.6,369.5 1726.0,365.8 1767.0,361.0 1808.0,357.0 1850.0,354.3 1890.6,352.2" fill="none" stroke="#ffff00" stroke-width="3.5" stroke-linejoin="round" clip-path="url(#cg)"/>
<text transform="translate(289.24,620.70) scale(0.8148,1)" font-size="37" fill="#eaeaea" stroke="#eaeaea" stroke-width="0.7">Avg dE2000: 2.1</text>
<text transform="translate(713.24,620.70) scale(0.7721,1)" font-size="37" fill="#eaeaea" stroke="#eaeaea" stroke-width="0.7">Avg CCT: 6703</text>
<text transform="translate(1106.42,620.70) scale(0.8403,1)" font-size="37" fill="#eaeaea" stroke="#eaeaea" stroke-width="0.7">Contrast Ratio: 755</text>
<text transform="translate(1511.64,620.70) scale(0.8254,1)" font-size="37" fill="#eaeaea" stroke="#eaeaea" stroke-width="0.7">Average Gamma: 2.211</text>
<rect x="200" y="646" width="1720" height="163" fill="#000000"/>
<rect x="323.2" y="654" width="122.7" height="126" fill="url(#g34)"/>
<rect x="323" y="654" width="123" height="126" fill="none" stroke="#f8f8f8" stroke-width="2"/>
<text transform="translate(384.50,798.50) scale(0.9500,1)" font-size="14.5" fill="#ffffff" text-anchor="middle" stroke="#ffffff" stroke-width="0.2">0</text>
<rect x="467.9" y="654" width="122.7" height="126" fill="url(#g35)"/>
<rect x="468" y="654" width="123" height="126" fill="none" stroke="#f8f8f8" stroke-width="2"/>
<text transform="translate(529.23,798.50) scale(0.9500,1)" font-size="14.5" fill="#ffffff" text-anchor="middle" stroke="#ffffff" stroke-width="0.2">10</text>
<rect x="612.7" y="654" width="122.7" height="126" fill="url(#g36)"/>
<rect x="613" y="654" width="123" height="126" fill="none" stroke="#f8f8f8" stroke-width="2"/>
<text transform="translate(673.96,798.50) scale(0.9500,1)" font-size="14.5" fill="#ffffff" text-anchor="middle" stroke="#ffffff" stroke-width="0.2">20</text>
<rect x="757.4" y="654" width="122.7" height="126" fill="url(#g37)"/>
<rect x="757" y="654" width="123" height="126" fill="none" stroke="#f8f8f8" stroke-width="2"/>
<text transform="translate(818.69,798.50) scale(0.9500,1)" font-size="14.5" fill="#ffffff" text-anchor="middle" stroke="#ffffff" stroke-width="0.2">30</text>
<rect x="902.1" y="654" width="122.7" height="126" fill="url(#g38)"/>
<rect x="902" y="654" width="123" height="126" fill="none" stroke="#f8f8f8" stroke-width="2"/>
<text transform="translate(963.42,798.50) scale(0.9500,1)" font-size="14.5" fill="#ffffff" text-anchor="middle" stroke="#ffffff" stroke-width="0.2">40</text>
<rect x="1046.8" y="654" width="122.7" height="126" fill="url(#g39)"/>
<rect x="1047" y="654" width="123" height="126" fill="none" stroke="#f8f8f8" stroke-width="2"/>
<text transform="translate(1108.15,798.50) scale(0.9500,1)" font-size="14.5" fill="#ffffff" text-anchor="middle" stroke="#ffffff" stroke-width="0.2">50</text>
<rect x="1191.6" y="654" width="122.7" height="126" fill="url(#g40)"/>
<rect x="1192" y="654" width="123" height="126" fill="none" stroke="#f8f8f8" stroke-width="2"/>
<text transform="translate(1252.88,798.50) scale(0.9500,1)" font-size="14.5" fill="#ffffff" text-anchor="middle" stroke="#ffffff" stroke-width="0.2">60</text>
<rect x="1336.3" y="654" width="122.7" height="126" fill="url(#g41)"/>
<rect x="1336" y="654" width="123" height="126" fill="none" stroke="#f8f8f8" stroke-width="2"/>
<text transform="translate(1397.61,798.50) scale(0.9500,1)" font-size="14.5" fill="#ffffff" text-anchor="middle" stroke="#ffffff" stroke-width="0.2">70</text>
<rect x="1481.0" y="654" width="122.7" height="126" fill="url(#g42)"/>
<rect x="1481" y="654" width="123" height="126" fill="none" stroke="#f8f8f8" stroke-width="2"/>
<text transform="translate(1542.34,798.50) scale(0.9500,1)" font-size="14.5" fill="#ffffff" text-anchor="middle" stroke="#ffffff" stroke-width="0.2">80</text>
<rect x="1625.8" y="654" width="122.7" height="126" fill="url(#g43)"/>
<rect x="1626" y="654" width="123" height="126" fill="none" stroke="#f8f8f8" stroke-width="2"/>
<text transform="translate(1687.07,798.50) scale(0.9500,1)" font-size="14.5" fill="#ffffff" text-anchor="middle" stroke="#ffffff" stroke-width="0.2">90</text>
<rect x="1770.5" y="654" width="122.7" height="126" fill="url(#g44)"/>
<rect x="1771" y="654" width="123" height="126" fill="none" stroke="#f8f8f8" stroke-width="2"/>
<text transform="translate(1831.80,798.50) scale(0.9500,1)" font-size="14.5" fill="#ffffff" text-anchor="middle" stroke="#ffffff" stroke-width="0.2">100</text>
<text transform="translate(313.8,702.7) rotate(-90) scale(1.0,1)" font-size="15.5" fill="#f0f0f0" stroke="#f0f0f0" stroke-width="0.3">Actual</text>
<text transform="translate(313.8,774) rotate(-90) scale(0.95,1)" font-size="15.5" fill="#f0f0f0" stroke="#f0f0f0" stroke-width="0.3">Target</text>
<text transform="translate(220.72,892.20) scale(0.8909,1)" font-size="35" fill="#eaeaea" stroke="#eaeaea" stroke-width="0.6">Current Reading</text>
<text transform="translate(222.01,945.50) scale(0.8679,1)" font-size="30" fill="#eaeaea" stroke="#eaeaea" stroke-width="0.6">x: 0.3099</text>
<text transform="translate(375.94,945.50) scale(0.8729,1)" font-size="30" fill="#eaeaea" stroke="#eaeaea" stroke-width="0.6">y: 0.33</text>
<text transform="translate(220.56,987.40) scale(0.8948,1)" font-size="30" fill="#eaeaea" stroke="#eaeaea" stroke-width="0.6">u&#x27;: 0.1955</text>
<text transform="translate(375.91,987.40) scale(0.8827,1)" font-size="30" fill="#eaeaea" stroke="#eaeaea" stroke-width="0.6">v&#x27;: 0.4685</text>
<text transform="translate(221.15,1029.70) scale(0.9024,1)" font-size="30" fill="#eaeaea" stroke="#eaeaea" stroke-width="0.6">cd/m²: 252.8639</text>
<text transform="translate(221.54,1072.00) scale(0.8451,1)" font-size="30" fill="#eaeaea" stroke="#eaeaea" stroke-width="0.6">ΔE 2000: 2.65</text>
<text transform="translate(648.78,851.00) scale(0.8156,1)" font-size="17.5" fill="#d4d4d4">CIE 1931 xy</text>
<clipPath id="cc"><rect x="576.8" y="857.2" width="258.4000000000001" height="205.5999999999999"/></clipPath>
<g clip-path="url(#cc)"><g filter="url(#blur)"><rect x="556.9" y="837.6" width="10.5" height="10.4" fill="#7affc8"/><rect x="566.9" y="837.6" width="10.5" height="10.4" fill="#7fffc8"/><rect x="576.8" y="837.6" width="10.5" height="10.4" fill="#84ffc8"/><rect x="586.7" y="837.6" width="10.5" height="10.4" fill="#8affc7"/><rect x="596.7" y="837.6" width="10.5" height="10.4" fill="#8fffc7"/><rect x="606.6" y="837.6" width="10.5" height="10.4" fill="#94ffc7"/><rect x="616.6" y="837.6" width="10.5" height="10.4" fill="#99ffc7"/><rect x="626.5" y="837.6" width="10.5" height="10.4" fill="#9fffc6"/><rect x="636.4" y="837.6" width="10.5" height="10.4" fill="#a4ffc6"/><rect x="646.4" y="837.6" width="10.5" height="10.4" fill="#aaffc6"/><rect x="656.3" y="837.6" width="10.5" height="10.4" fill="#afffc6"/><rect x="666.2" y="837.6" width="10.5" height="10.4" fill="#b5ffc5"/><rect x="676.2" y="837.6" width="10.5" height="10.4" fill="#baffc5"/><rect x="686.1" y="837.6" width="10.5" height="10.4" fill="#c0ffc5"/><rect x="696.1" y="837.6" width="10.5" height="10.4" fill="#c6ffc4"/><rect x="706.0" y="837.6" width="10.5" height="10.4" fill="#ccffc4"/><rect x="715.9" y="837.6" width="10.5" height="10.4" fill="#d2ffc4"/><rect x="725.9" y="837.6" width="10.5" height="10.4" fill="#d8ffc4"/><rect x="735.8" y="837.6" width="10.5" height="10.4" fill="#deffc3"/><rect x="745.8" y="837.6" width="10.5" height="10.4" fill="#e4ffc3"/><rect x="755.7" y="837.6" width="10.5" height="10.4" fill="#eaffc3"/><rect x="765.6" y="837.6" width="10.5" height="10.4" fill="#f0ffc2"/><rect x="775.6" y="837.6" width="10.5" height="10.4" fill="#f6ffc2"/><rect x="785.5" y="837.6" width="10.5" height="10.4" fill="#fcffc2"/><rect x="795.4" y="837.6" width="10.5" height="10.4" fill="#fffbbf"/><rect x="805.4" y="837.6" width="10.5" height="10.4" fill="#fff5ba"/><rect x="815.3" y="837.6" width="10.5" height="10.4" fill="#ffefb5"/><rect x="825.3" y="837.6" width="10.5" height="10.4" fill="#ffeab0"/><rect x="835.2" y="837.6" width="10.5" height="10.4" fill="#ffe4ac"/><rect x="845.1" y="837.6" width="10.5" height="10.4" fill="#ffdfa8"/><rect x="556.9" y="847.4" width="10.5" height="10.4" fill="#7dffcc"/><rect x="566.9" y="847.4" width="10.5" height="10.4" fill="#82ffcc"/><rect x="576.8" y="847.4" width="10.5" height="10.4" fill="#87ffcc"/><rect x="586.7" y="847.4" width="10.5" height="10.4" fill="#8dffcb"/><rect x="596.7" y="847.4" width="10.5" height="10.4" fill="#92ffcb"/><rect x="606.6" y="847.4" width="10.5" height="10.4" fill="#97ffcb"/><rect x="616.6" y="847.4" width="10.5" height="10.4" fill="#9dffcb"/><rect x="626.5" y="847.4" width="10.5" height="10.4" fill="#a2ffca"/><rect x="636.4" y="847.4" width="10.5" height="10.4" fill="#a8ffca"/><rect x="646.4" y="847.4" width="10.5" height="10.4" fill="#adffca"/><rect x="656.3" y="847.4" width="10.5" height="10.4" fill="#b3ffca"/><rect x="666.2" y="847.4" width="10.5" height="10.4" fill="#b8ffc9"/><rect x="676.2" y="847.4" width="10.5" height="10.4" fill="#beffc9"/><rect x="686.1" y="847.4" width="10.5" height="10.4" fill="#c4ffc9"/><rect x="696.1" y="847.4" width="10.5" height="10.4" fill="#caffc9"/><rect x="706.0" y="847.4" width="10.5" height="10.4" fill="#d0ffc8"/><rect x="715.9" y="847.4" width="10.5" height="10.4" fill="#d6ffc8"/><rect x="725.9" y="847.4" width="10.5" height="10.4" fill="#dcffc8"/><rect x="735.8" y="847.4" width="10.5" height="10.4" fill="#e2ffc8"/><rect x="745.8" y="847.4" width="10.5" height="10.4" fill="#e8ffc7"/><rect x="755.7" y="847.4" width="10.5" height="10.4" fill="#eeffc7"/><rect x="765.6" y="847.4" width="10.5" height="10.4" fill="#f4ffc7"/><rect x="775.6" y="847.4" width="10.5" height="10.4" fill="#fbffc6"/><rect x="785.5" y="847.4" width="10.5" height="10.4" fill="#fffdc5"/><rect x="795.4" y="847.4" width="10.5" height="10.4" fill="#fff7bf"/><rect x="805.4" y="847.4" width="10.5" height="10.4" fill="#fff1ba"/><rect x="815.3" y="847.4" width="10.5" height="10.4" fill="#ffebb6"/><rect x="825.3" y="847.4" width="10.5" height="10.4" fill="#ffe5b1"/><rect x="835.2" y="847.4" width="10.5" height="10.4" fill="#ffe0ad"/><rect x="845.1" y="847.4" width="10.5" height="10.4" fill="#ffdba8"/><rect x="556.9" y="857.2" width="10.5" height="10.4" fill="#80ffd0"/><rect x="566.9" y="857.2" width="10.5" height="10.4" fill="#85ffd0"/><rect x="576.8" y="857.2" width="10.5" height="10.4" fill="#8affd0"/><rect x="586.7" y="857.2" width="10.5" height="10.4" fill="#90ffd0"/><rect x="596.7" y="857.2" width="10.5" height="10.4" fill="#95ffcf"/><rect x="606.6" y="857.2" width="10.5" height="10.4" fill="#9affcf"/><rect x="616.6" y="857.2" width="10.5" height="10.4" fill="#a0ffcf"/><rect x="626.5" y="857.2" width="10.5" height="10.4" fill="#a5ffcf"/><rect x="636.4" y="857.2" width="10.5" height="10.4" fill="#abffce"/><rect x="646.4" y="857.2" width="10.5" height="10.4" fill="#b1ffce"/><rect x="656.3" y="857.2" width="10.5" height="10.4" fill="#b6ffce"/><rect x="666.2" y="857.2" width="10.5" height="10.4" fill="#bcffce"/><rect x="676.2" y="857.2" width="10.5" height="10.4" fill="#c2ffcd"/><rect x="686.1" y="857.2" width="10.5" height="10.4" fill="#c8ffcd"/><rect x="696.1" y="857.2" width="10.5" height="10.4" fill="#ceffcd"/><rect x="706.0" y="857.2" width="10.5" height="10.4" fill="#d4ffcd"/><rect x="715.9" y="857.2" width="10.5" height="10.4" fill="#daffcc"/><rect x="725.9" y="857.2" width="10.5" height="10.4" fill="#e0ffcc"/><rect x="735.8" y="857.2" width="10.5" height="10.4" fill="#e6ffcc"/><rect x="745.8" y="857.2" width="10.5" height="10.4" fill="#ecffcc"/><rect x="755.7" y="857.2" width="10.5" height="10.4" fill="#f3ffcb"/><rect x="765.6" y="857.2" width="10.5" height="10.4" fill="#f9ffcb"/><rect x="775.6" y="857.2" width="10.5" height="10.4" fill="#ffffcb"/><rect x="785.5" y="857.2" width="10.5" height="10.4" fill="#fff8c5"/><rect x="795.4" y="857.2" width="10.5" height="10.4" fill="#fff2c0"/><rect x="805.4" y="857.2" width="10.5" height="10.4" fill="#ffecbb"/><rect x="815.3" y="857.2" width="10.5" height="10.4" fill="#ffe7b7"/><rect x="825.3" y="857.2" width="10.5" height="10.4" fill="#ffe1b2"/><rect x="835.2" y="857.2" width="10.5" height="10.4" fill="#ffdcae"/><rect x="845.1" y="857.2" width="10.5" height="10.4" fill="#ffd7a9"/><rect x="556.9" y="867.0" width="10.5" height="10.4" fill="#83ffd4"/><rect x="566.9" y="867.0" width="10.5" height="10.4" fill="#88ffd4"/><rect x="576.8" y="867.0" width="10.5" height="10.4" fill="#8dffd4"/><rect x="586.7" y="867.0" width="10.5" height="10.4" fill="#93ffd4"/><rect x="596.7" y="867.0" width="10.5" height="10.4" fill="#98ffd4"/><rect x="606.6" y="867.0" width="10.5" height="10.4" fill="#9effd3"/><rect x="616.6" y="867.0" width="10.5" height="10.4" fill="#a3ffd3"/><rect x="626.5" y="867.0" width="10.5" height="10.4" fill="#a9ffd3"/><rect x="636.4" y="867.0" width="10.5" height="10.4" fill="#afffd3"/><rect x="646.4" y="867.0" width="10.5" height="10.4" fill="#b4ffd2"/><rect x="656.3" y="867.0" width="10.5" height="10.4" fill="#baffd2"/><rect x="666.2" y="867.0" width="10.5" height="10.4" fill="#c0ffd2"/><rect x="676.2" y="867.0" width="10.5" height="10.4" fill="#c6ffd2"/><rect x="686.1" y="867.0" width="10.5" height="10.4" fill="#ccffd2"/><rect x="696.1" y="867.0" width="10.5" height="10.4" fill="#d2ffd1"/><rect x="706.0" y="867.0" width="10.5" height="10.4" fill="#d8ffd1"/><rect x="715.9" y="867.0" width="10.5" height="10.4" fill="#deffd1"/><rect x="725.9" y="867.0" width="10.5" height="10.4" fill="#e4ffd1"/><rect x="735.8" y="867.0" width="10.5" height="10.4" fill="#eaffd0"/><rect x="745.8" y="867.0" width="10.5" height="10.4" fill="#f1ffd0"/><rect x="755.7" y="867.0" width="10.5" height="10.4" fill="#f7ffd0"/><rect x="765.6" y="867.0" width="10.5" height="10.4" fill="#feffd0"/><rect x="775.6" y="867.0" width="10.5" height="10.4" fill="#fffacb"/><rect x="785.5" y="867.0" width="10.5" height="10.4" fill="#fff4c6"/><rect x="795.4" y="867.0" width="10.5" height="10.4" fill="#ffeec1"/><rect x="805.4" y="867.0" width="10.5" height="10.4" fill="#ffe8bc"/><rect x="815.3" y="867.0" width="10.5" height="10.4" fill="#ffe2b7"/><rect x="825.3" y="867.0" width="10.5" height="10.4" fill="#ffddb3"/><rect x="835.2" y="867.0" width="10.5" height="10.4" fill="#ffd8ae"/><rect x="845.1" y="867.0" width="10.5" height="10.4" fill="#ffd3aa"/><rect x="556.9" y="876.8" width="10.5" height="10.4" fill="#86ffd9"/><rect x="566.9" y="876.8" width="10.5" height="10.4" fill="#8bffd8"/><rect x="576.8" y="876.8" width="10.5" height="10.4" fill="#91ffd8"/><rect x="586.7" y="876.8" width="10.5" height="10.4" fill="#96ffd8"/><rect x="596.7" y="876.8" width="10.5" height="10.4" fill="#9cffd8"/><rect x="606.6" y="876.8" width="10.5" height="10.4" fill="#a1ffd8"/><rect x="616.6" y="876.8" width="10.5" height="10.4" fill="#a7ffd7"/><rect x="626.5" y="876.8" width="10.5" height="10.4" fill="#acffd7"/><rect x="636.4" y="876.8" width="10.5" height="10.4" fill="#b2ffd7"/><rect x="646.4" y="876.8" width="10.5" height="10.4" fill="#b8ffd7"/><rect x="656.3" y="876.8" width="10.5" height="10.4" fill="#beffd7"/><rect x="666.2" y="876.8" width="10.5" height="10.4" fill="#c4ffd6"/><rect x="676.2" y="876.8" width="10.5" height="10.4" fill="#caffd6"/><rect x="686.1" y="876.8" width="10.5" height="10.4" fill="#d0ffd6"/><rect x="696.1" y="876.8" width="10.5" height="10.4" fill="#d6ffd6"/><rect x="706.0" y="876.8" width="10.5" height="10.4" fill="#dcffd6"/><rect x="715.9" y="876.8" width="10.5" height="10.4" fill="#e2ffd5"/><rect x="725.9" y="876.8" width="10.5" height="10.4" fill="#e9ffd5"/><rect x="735.8" y="876.8" width="10.5" height="10.4" fill="#efffd5"/><rect x="745.8" y="876.8" width="10.5" height="10.4" fill="#f5ffd5"/><rect x="755.7" y="876.8" width="10.5" height="10.4" fill="#fcffd5"/><rect x="765.6" y="876.8" width="10.5" height="10.4" fill="#fffcd1"/><rect x="775.6" y="876.8" width="10.5" height="10.4" fill="#fff5cc"/><rect x="785.5" y="876.8" width="10.5" height="10.4" fill="#ffefc7"/><rect x="795.4" y="876.8" width="10.5" height="10.4" fill="#ffe9c2"/><rect x="805.4" y="876.8" width="10.5" height="10.4" fill="#ffe4bd"/><rect x="815.3" y="876.8" width="10.5" height="10.4" fill="#ffdeb8"/><rect x="825.3" y="876.8" width="10.5" height="10.4" fill="#ffd9b4"/><rect x="835.2" y="876.8" width="10.5" height="10.4" fill="#ffd4af"/><rect x="845.1" y="876.8" width="10.5" height="10.4" fill="#ffcfab"/><rect x="556.9" y="886.6" width="10.5" height="10.4" fill="#89ffdd"/><rect x="566.9" y="886.6" width="10.5" height="10.4" fill="#8effdd"/><rect x="576.8" y="886.6" width="10.5" height="10.4" fill="#94ffdd"/><rect x="586.7" y="886.6" width="10.5" height="10.4" fill="#99ffdc"/><rect x="596.7" y="886.6" width="10.5" height="10.4" fill="#9fffdc"/><rect x="606.6" y="886.6" width="10.5" height="10.4" fill="#a5ffdc"/><rect x="616.6" y="886.6" width="10.5" height="10.4" fill="#aaffdc"/><rect x="626.5" y="886.6" width="10.5" height="10.4" fill="#b0ffdc"/><rect x="636.4" y="886.6" width="10.5" height="10.4" fill="#b6ffdc"/><rect x="646.4" y="886.6" width="10.5" height="10.4" fill="#bcffdb"/><rect x="656.3" y="886.6" width="10.5" height="10.4" fill="#c2ffdb"/><rect x="666.2" y="886.6" width="10.5" height="10.4" fill="#c8ffdb"/><rect x="676.2" y="886.6" width="10.5" height="10.4" fill="#ceffdb"/><rect x="686.1" y="886.6" width="10.5" height="10.4" fill="#d4ffdb"/><rect x="696.1" y="886.6" width="10.5" height="10.4" fill="#daffda"/><rect x="706.0" y="886.6" width="10.5" height="10.4" fill="#e0ffda"/><rect x="715.9" y="886.6" width="10.5" height="10.4" fill="#e7ffda"/><rect x="725.9" y="886.6" width="10.5" height="10.4" fill="#edffda"/><rect x="735.8" y="886.6" width="10.5" height="10.4" fill="#f4ffda"/><rect x="745.8" y="886.6" width="10.5" height="10.4" fill="#faffda"/><rect x="755.7" y="886.6" width="10.5" height="10.4" fill="#fffdd8"/><rect x="765.6" y="886.6" width="10.5" height="10.4" fill="#fff7d2"/><rect x="775.6" y="886.6" width="10.5" height="10.4" fill="#fff1cd"/><rect x="785.5" y="886.6" width="10.5" height="10.4" fill="#ffebc7"/><rect x="795.4" y="886.6" width="10.5" height="10.4" fill="#ffe5c2"/><rect x="805.4" y="886.6" width="10.5" height="10.4" fill="#ffdfbe"/><rect x="815.3" y="886.6" width="10.5" height="10.4" fill="#ffdab9"/><rect x="825.3" y="886.6" width="10.5" height="10.4" fill="#ffd5b4"/><rect x="835.2" y="886.6" width="10.5" height="10.4" fill="#ffd0b0"/><rect x="845.1" y="886.6" width="10.5" height="10.4" fill="#ffcbac"/><rect x="556.9" y="896.4" width="10.5" height="10.4" fill="#8cffe1"/><rect x="566.9" y="896.4" width="10.5" height="10.4" fill="#92ffe1"/><rect x="576.8" y="896.4" width="10.5" height="10.4" fill="#97ffe1"/><rect x="586.7" y="896.4" width="10.5" height="10.4" fill="#9dffe1"/><rect x="596.7" y="896.4" width="10.5" height="10.4" fill="#a2ffe1"/><rect x="606.6" y="896.4" width="10.5" height="10.4" fill="#a8ffe1"/><rect x="616.6" y="896.4" width="10.5" height="10.4" fill="#aeffe0"/><rect x="626.5" y="896.4" width="10.5" height="10.4" fill="#b4ffe0"/><rect x="636.4" y="896.4" width="10.5" height="10.4" fill="#baffe0"/><rect x="646.4" y="896.4" width="10.5" height="10.4" fill="#c0ffe0"/><rect x="656.3" y="896.4" width="10.5" height="10.4" fill="#c6ffe0"/><rect x="666.2" y="896.4" width="10.5" height="10.4" fill="#ccffe0"/><rect x="676.2" y="896.4" width="10.5" height="10.4" fill="#d2ffdf"/><rect x="686.1" y="896.4" width="10.5" height="10.4" fill="#d8ffdf"/><rect x="696.1" y="896.4" width="10.5" height="10.4" fill="#deffdf"/><rect x="706.0" y="896.4" width="10.5" height="10.4" fill="#e5ffdf"/><rect x="715.9" y="896.4" width="10.5" height="10.4" fill="#ebffdf"/><rect x="725.9" y="896.4" width="10.5" height="10.4" fill="#f2ffdf"/><rect x="735.8" y="896.4" width="10.5" height="10.4" fill="#f8ffdf"/><rect x="745.8" y="896.4" width="10.5" height="10.4" fill="#ffffde"/><rect x="755.7" y="896.4" width="10.5" height="10.4" fill="#fff8d8"/><rect x="765.6" y="896.4" width="10.5" height="10.4" fill="#fff2d3"/><rect x="775.6" y="896.4" width="10.5" height="10.4" fill="#ffeccd"/><rect x="785.5" y="896.4" width="10.5" height="10.4" fill="#ffe6c8"/><rect x="795.4" y="896.4" width="10.5" height="10.4" fill="#ffe1c3"/><rect x="805.4" y="896.4" width="10.5" height="10.4" fill="#ffdbbe"/><rect x="815.3" y="896.4" width="10.5" height="10.4" fill="#ffd6ba"/><rect x="825.3" y="896.4" width="10.5" height="10.4" fill="#ffd1b5"/><rect x="835.2" y="896.4" width="10.5" height="10.4" fill="#ffccb1"/><rect x="845.1" y="896.4" width="10.5" height="10.4" fill="#ffc8ad"/><rect x="556.9" y="906.2" width="10.5" height="10.4" fill="#8fffe6"/><rect x="566.9" y="906.2" width="10.5" height="10.4" fill="#95ffe6"/><rect x="576.8" y="906.2" width="10.5" height="10.4" fill="#9affe6"/><rect x="586.7" y="906.2" width="10.5" height="10.4" fill="#a0ffe5"/><rect x="596.7" y="906.2" width="10.5" height="10.4" fill="#a6ffe5"/><rect x="606.6" y="906.2" width="10.5" height="10.4" fill="#acffe5"/><rect x="616.6" y="906.2" width="10.5" height="10.4" fill="#b2ffe5"/><rect x="626.5" y="906.2" width="10.5" height="10.4" fill="#b8ffe5"/><rect x="636.4" y="906.2" width="10.5" height="10.4" fill="#beffe5"/><rect x="646.4" y="906.2" width="10.5" height="10.4" fill="#c4ffe5"/><rect x="656.3" y="906.2" width="10.5" height="10.4" fill="#caffe5"/><rect x="666.2" y="906.2" width="10.5" height="10.4" fill="#d0ffe4"/><rect x="676.2" y="906.2" width="10.5" height="10.4" fill="#d6ffe4"/><rect x="686.1" y="906.2" width="10.5" height="10.4" fill="#ddffe4"/><rect x="696.1" y="906.2" width="10.5" height="10.4" fill="#e3ffe4"/><rect x="706.0" y="906.2" width="10.5" height="10.4" fill="#e9ffe4"/><rect x="715.9" y="906.2" width="10.5" height="10.4" fill="#f0ffe4"/><rect x="725.9" y="906.2" width="10.5" height="10.4" fill="#f7ffe4"/><rect x="735.8" y="906.2" width="10.5" height="10.4" fill="#fdffe3"/><rect x="745.8" y="906.2" width="10.5" height="10.4" fill="#fffadf"/><rect x="755.7" y="906.2" width="10.5" height="10.4" fill="#fff4d9"/><rect x="765.6" y="906.2" width="10.5" height="10.4" fill="#ffeed3"/><rect x="775.6" y="906.2" width="10.5" height="10.4" fill="#ffe8ce"/><rect x="785.5" y="906.2" width="10.5" height="10.4" fill="#ffe2c9"/><rect x="795.4" y="906.2" width="10.5" height="10.4" fill="#ffdcc4"/><rect x="805.4" y="906.2" width="10.5" height="10.4" fill="#ffd7bf"/><rect x="815.3" y="906.2" width="10.5" height="10.4" fill="#ffd2ba"/><rect x="825.3" y="906.2" width="10.5" height="10.4" fill="#ffcdb6"/><rect x="835.2" y="906.2" width="10.5" height="10.4" fill="#ffc8b2"/><rect x="845.1" y="906.2" width="10.5" height="10.4" fill="#ffc4ad"/><rect x="556.9" y="915.9" width="10.5" height="10.4" fill="#93ffea"/><rect x="566.9" y="915.9" width="10.5" height="10.4" fill="#98ffea"/><rect x="576.8" y="915.9" width="10.5" height="10.4" fill="#9effea"/><rect x="586.7" y="915.9" width="10.5" height="10.4" fill="#a4ffea"/><rect x="596.7" y="915.9" width="10.5" height="10.4" fill="#aaffea"/><rect x="606.6" y="915.9" width="10.5" height="10.4" fill="#afffea"/><rect x="616.6" y="915.9" width="10.5" height="10.4" fill="#b5ffea"/><rect x="626.5" y="915.9" width="10.5" height="10.4" fill="#bbffea"/><rect x="636.4" y="915.9" width="10.5" height="10.4" fill="#c2ffea"/><rect x="646.4" y="915.9" width="10.5" height="10.4" fill="#c8ffe9"/><rect x="656.3" y="915.9" width="10.5" height="10.4" fill="#ceffe9"/><rect x="666.2" y="915.9" width="10.5" height="10.4" fill="#d4ffe9"/><rect x="676.2" y="915.9" width="10.5" height="10.4" fill="#dbffe9"/><rect x="686.1" y="915.9" width="10.5" height="10.4" fill="#e1ffe9"/><rect x="696.1" y="915.9" width="10.5" height="10.4" fill="#e7ffe9"/><rect x="706.0" y="915.9" width="10.5" height="10.4" fill="#eeffe9"/><rect x="715.9" y="915.9" width="10.5" height="10.4" fill="#f5ffe9"/><rect x="725.9" y="915.9" width="10.5" height="10.4" fill="#fbffe9"/><rect x="735.8" y="915.9" width="10.5" height="10.4" fill="#fffce6"/><rect x="745.8" y="915.9" width="10.5" height="10.4" fill="#fff5e0"/><rect x="755.7" y="915.9" width="10.5" height="10.4" fill="#ffefda"/><rect x="765.6" y="915.9" width="10.5" height="10.4" fill="#ffe9d4"/><rect x="775.6" y="915.9" width="10.5" height="10.4" fill="#ffe3cf"/><rect x="785.5" y="915.9" width="10.5" height="10.4" fill="#ffdeca"/><rect x="795.4" y="915.9" width="10.5" height="10.4" fill="#ffd8c5"/><rect x="805.4" y="915.9" width="10.5" height="10.4" fill="#ffd3c0"/><rect x="815.3" y="915.9" width="10.5" height="10.4" fill="#ffcebb"/><rect x="825.3" y="915.9" width="10.5" height="10.4" fill="#ffc9b7"/><rect x="835.2" y="915.9" width="10.5" height="10.4" fill="#ffc5b2"/><rect x="845.1" y="915.9" width="10.5" height="10.4" fill="#ffc0ae"/><rect x="556.9" y="925.7" width="10.5" height="10.4" fill="#96ffef"/><rect x="566.9" y="925.7" width="10.5" height="10.4" fill="#9cffef"/><rect x="576.8" y="925.7" width="10.5" height="10.4" fill="#a1ffef"/><rect x="586.7" y="925.7" width="10.5" height="10.4" fill="#a7ffef"/><rect x="596.7" y="925.7" width="10.5" height="10.4" fill="#adffef"/><rect x="606.6" y="925.7" width="10.5" height="10.4" fill="#b3ffef"/><rect x="616.6" y="925.7" width="10.5" height="10.4" fill="#b9ffef"/><rect x="626.5" y="925.7" width="10.5" height="10.4" fill="#bfffef"/><rect x="636.4" y="925.7" width="10.5" height="10.4" fill="#c6ffef"/><rect x="646.4" y="925.7" width="10.5" height="10.4" fill="#ccffee"/><rect x="656.3" y="925.7" width="10.5" height="10.4" fill="#d2ffee"/><rect x="666.2" y="925.7" width="10.5" height="10.4" fill="#d9ffee"/><rect x="676.2" y="925.7" width="10.5" height="10.4" fill="#dfffee"/><rect x="686.1" y="925.7" width="10.5" height="10.4" fill="#e6ffee"/><rect x="696.1" y="925.7" width="10.5" height="10.4" fill="#ecffee"/><rect x="706.0" y="925.7" width="10.5" height="10.4" fill="#f3ffee"/><rect x="715.9" y="925.7" width="10.5" height="10.4" fill="#faffee"/><rect x="725.9" y="925.7" width="10.5" height="10.4" fill="#fffeec"/><rect x="735.8" y="925.7" width="10.5" height="10.4" fill="#fff7e6"/><rect x="745.8" y="925.7" width="10.5" height="10.4" fill="#fff1e0"/><rect x="755.7" y="925.7" width="10.5" height="10.4" fill="#ffeada"/><rect x="765.6" y="925.7" width="10.5" height="10.4" fill="#ffe4d5"/><rect x="775.6" y="925.7" width="10.5" height="10.4" fill="#ffdfcf"/><rect x="785.5" y="925.7" width="10.5" height="10.4" fill="#ffd9ca"/><rect x="795.4" y="925.7" width="10.5" height="10.4" fill="#ffd4c5"/><rect x="805.4" y="925.7" width="10.5" height="10.4" fill="#ffcfc0"/><rect x="815.3" y="925.7" width="10.5" height="10.4" fill="#ffcabc"/><rect x="825.3" y="925.7" width="10.5" height="10.4" fill="#ffc5b7"/><rect x="835.2" y="925.7" width="10.5" height="10.4" fill="#ffc1b3"/><rect x="845.1" y="925.7" width="10.5" height="10.4" fill="#ffbcaf"/><rect x="556.9" y="935.5" width="10.5" height="10.4" fill="#99fff4"/><rect x="566.9" y="935.5" width="10.5" height="10.4" fill="#9ffff4"/><rect x="576.8" y="935.5" width="10.5" height="10.4" fill="#a5fff4"/><rect x="586.7" y="935.5" width="10.5" height="10.4" fill="#abfff4"/><rect x="596.7" y="935.5" width="10.5" height="10.4" fill="#b1fff4"/><rect x="606.6" y="935.5" width="10.5" height="10.4" fill="#b7fff4"/><rect x="616.6" y="935.5" width="10.5" height="10.4" fill="#bdfff4"/><rect x="626.5" y="935.5" width="10.5" height="10.4" fill="#c3fff4"/><rect x="636.4" y="935.5" width="10.5" height="10.4" fill="#cafff4"/><rect x="646.4" y="935.5" width="10.5" height="10.4" fill="#d0fff3"/><rect x="656.3" y="935.5" width="10.5" height="10.4" fill="#d7fff3"/><rect x="666.2" y="935.5" width="10.5" height="10.4" fill="#ddfff3"/><rect x="676.2" y="935.5" width="10.5" height="10.4" fill="#e4fff3"/><rect x="686.1" y="935.5" width="10.5" height="10.4" fill="#eafff3"/><rect x="696.1" y="935.5" width="10.5" height="10.4" fill="#f1fff3"/><rect x="706.0" y="935.5" width="10.5" height="10.4" fill="#f8fff3"/><rect x="715.9" y="935.5" width="10.5" height="10.4" fill="#fffff3"/><rect x="725.9" y="935.5" width="10.5" height="10.4" fill="#fff9ed"/><rect x="735.8" y="935.5" width="10.5" height="10.4" fill="#fff2e7"/><rect x="745.8" y="935.5" width="10.5" height="10.4" fill="#ffece1"/><rect x="755.7" y="935.5" width="10.5" height="10.4" fill="#ffe6db"/><rect x="765.6" y="935.5" width="10.5" height="10.4" fill="#ffe0d5"/><rect x="775.6" y="935.5" width="10.5" height="10.4" fill="#ffdbd0"/><rect x="785.5" y="935.5" width="10.5" height="10.4" fill="#ffd5cb"/><rect x="795.4" y="935.5" width="10.5" height="10.4" fill="#ffd0c6"/><rect x="805.4" y="935.5" width="10.5" height="10.4" fill="#ffcbc1"/><rect x="815.3" y="935.5" width="10.5" height="10.4" fill="#ffc6bd"/><rect x="825.3" y="935.5" width="10.5" height="10.4" fill="#ffc2b8"/><rect x="835.2" y="935.5" width="10.5" height="10.4" fill="#ffbdb4"/><rect x="845.1" y="935.5" width="10.5" height="10.4" fill="#ffb9b0"/><rect x="556.9" y="945.3" width="10.5" height="10.4" fill="#9dfff9"/><rect x="566.9" y="945.3" width="10.5" height="10.4" fill="#a3fff9"/><rect x="576.8" y="945.3" width="10.5" height="10.4" fill="#a9fff9"/><rect x="586.7" y="945.3" width="10.5" height="10.4" fill="#affff9"/><rect x="596.7" y="945.3" width="10.5" height="10.4" fill="#b5fff9"/><rect x="606.6" y="945.3" width="10.5" height="10.4" fill="#bbfff9"/><rect x="616.6" y="945.3" width="10.5" height="10.4" fill="#c1fff9"/><rect x="626.5" y="945.3" width="10.5" height="10.4" fill="#c8fff9"/><rect x="636.4" y="945.3" width="10.5" height="10.4" fill="#cefff9"/><rect x="646.4" y="945.3" width="10.5" height="10.4" fill="#d4fff9"/><rect x="656.3" y="945.3" width="10.5" height="10.4" fill="#dbfff9"/><rect x="666.2" y="945.3" width="10.5" height="10.4" fill="#e2fff9"/><rect x="676.2" y="945.3" width="10.5" height="10.4" fill="#e8fff9"/><rect x="686.1" y="945.3" width="10.5" height="10.4" fill="#effff9"/><rect x="696.1" y="945.3" width="10.5" height="10.4" fill="#f6fff9"/><rect x="706.0" y="945.3" width="10.5" height="10.4" fill="#fdfff9"/><rect x="715.9" y="945.3" width="10.5" height="10.4" fill="#fffaf4"/><rect x="725.9" y="945.3" width="10.5" height="10.4" fill="#fff4ed"/><rect x="735.8" y="945.3" width="10.5" height="10.4" fill="#ffede7"/><rect x="745.8" y="945.3" width="10.5" height="10.4" fill="#ffe7e1"/><rect x="755.7" y="945.3" width="10.5" height="10.4" fill="#ffe1dc"/><rect x="765.6" y="945.3" width="10.5" height="10.4" fill="#ffdcd6"/><rect x="775.6" y="945.3" width="10.5" height="10.4" fill="#ffd6d1"/><rect x="785.5" y="945.3" width="10.5" height="10.4" fill="#ffd1cc"/><rect x="795.4" y="945.3" width="10.5" height="10.4" fill="#ffccc7"/><rect x="805.4" y="945.3" width="10.5" height="10.4" fill="#ffc7c2"/><rect x="815.3" y="945.3" width="10.5" height="10.4" fill="#ffc2bd"/><rect x="825.3" y="945.3" width="10.5" height="10.4" fill="#ffbeb9"/><rect x="835.2" y="945.3" width="10.5" height="10.4" fill="#ffbab5"/><rect x="845.1" y="945.3" width="10.5" height="10.4" fill="#ffb5b0"/><rect x="556.9" y="955.1" width="10.5" height="10.4" fill="#a0fffe"/><rect x="566.9" y="955.1" width="10.5" height="10.4" fill="#a6fffe"/><rect x="576.8" y="955.1" width="10.5" height="10.4" fill="#acfffe"/><rect x="586.7" y="955.1" width="10.5" height="10.4" fill="#b3fffe"/><rect x="596.7" y="955.1" width="10.5" height="10.4" fill="#b9fffe"/><rect x="606.6" y="955.1" width="10.5" height="10.4" fill="#bffffe"/><rect x="616.6" y="955.1" width="10.5" height="10.4" fill="#c5fffe"/><rect x="626.5" y="955.1" width="10.5" height="10.4" fill="#ccfffe"/><rect x="636.4" y="955.1" width="10.5" height="10.4" fill="#d2fffe"/><rect x="646.4" y="955.1" width="10.5" height="10.4" fill="#d9fffe"/><rect x="656.3" y="955.1" width="10.5" height="10.4" fill="#e0fffe"/><rect x="666.2" y="955.1" width="10.5" height="10.4" fill="#e6fffe"/><rect x="676.2" y="955.1" width="10.5" height="10.4" fill="#edfffe"/><rect x="686.1" y="955.1" width="10.5" height="10.4" fill="#f4fffe"/><rect x="696.1" y="955.1" width="10.5" height="10.4" fill="#fbfffe"/><rect x="706.0" y="955.1" width="10.5" height="10.4" fill="#fffcfb"/><rect x="715.9" y="955.1" width="10.5" height="10.4" fill="#fff5f4"/><rect x="725.9" y="955.1" width="10.5" height="10.4" fill="#ffefee"/><rect x="735.8" y="955.1" width="10.5" height="10.4" fill="#ffe9e8"/><rect x="745.8" y="955.1" width="10.5" height="10.4" fill="#ffe3e2"/><rect x="755.7" y="955.1" width="10.5" height="10.4" fill="#ffdddc"/><rect x="765.6" y="955.1" width="10.5" height="10.4" fill="#ffd7d7"/><rect x="775.6" y="955.1" width="10.5" height="10.4" fill="#ffd2d1"/><rect x="785.5" y="955.1" width="10.5" height="10.4" fill="#ffcdcc"/><rect x="795.4" y="955.1" width="10.5" height="10.4" fill="#ffc8c7"/><rect x="805.4" y="955.1" width="10.5" height="10.4" fill="#ffc3c3"/><rect x="815.3" y="955.1" width="10.5" height="10.4" fill="#ffbfbe"/><rect x="825.3" y="955.1" width="10.5" height="10.4" fill="#ffbaba"/><rect x="835.2" y="955.1" width="10.5" height="10.4" fill="#ffb6b5"/><rect x="845.1" y="955.1" width="10.5" height="10.4" fill="#ffb2b1"/><rect x="556.9" y="964.9" width="10.5" height="10.4" fill="#a2fbff"/><rect x="566.9" y="964.9" width="10.5" height="10.4" fill="#a7fbff"/><rect x="576.8" y="964.9" width="10.5" height="10.4" fill="#aefbff"/><rect x="586.7" y="964.9" width="10.5" height="10.4" fill="#b4fbff"/><rect x="596.7" y="964.9" width="10.5" height="10.4" fill="#bafbff"/><rect x="606.6" y="964.9" width="10.5" height="10.4" fill="#c0fbff"/><rect x="616.6" y="964.9" width="10.5" height="10.4" fill="#c6fbff"/><rect x="626.5" y="964.9" width="10.5" height="10.4" fill="#cdfbff"/><rect x="636.4" y="964.9" width="10.5" height="10.4" fill="#d3fbff"/><rect x="646.4" y="964.9" width="10.5" height="10.4" fill="#dafbff"/><rect x="656.3" y="964.9" width="10.5" height="10.4" fill="#e0fbff"/><rect x="666.2" y="964.9" width="10.5" height="10.4" fill="#e7fbff"/><rect x="676.2" y="964.9" width="10.5" height="10.4" fill="#eefbff"/><rect x="686.1" y="964.9" width="10.5" height="10.4" fill="#f5faff"/><rect x="696.1" y="964.9" width="10.5" height="10.4" fill="#fbfaff"/><rect x="706.0" y="964.9" width="10.5" height="10.4" fill="#fff7fc"/><rect x="715.9" y="964.9" width="10.5" height="10.4" fill="#fff0f5"/><rect x="725.9" y="964.9" width="10.5" height="10.4" fill="#ffeaee"/><rect x="735.8" y="964.9" width="10.5" height="10.4" fill="#ffe4e8"/><rect x="745.8" y="964.9" width="10.5" height="10.4" fill="#ffdee2"/><rect x="755.7" y="964.9" width="10.5" height="10.4" fill="#ffd9dd"/><rect x="765.6" y="964.9" width="10.5" height="10.4" fill="#ffd3d7"/><rect x="775.6" y="964.9" width="10.5" height="10.4" fill="#ffced2"/><rect x="785.5" y="964.9" width="10.5" height="10.4" fill="#ffc9cd"/><rect x="795.4" y="964.9" width="10.5" height="10.4" fill="#ffc4c8"/><rect x="805.4" y="964.9" width="10.5" height="10.4" fill="#ffbfc3"/><rect x="815.3" y="964.9" width="10.5" height="10.4" fill="#ffbbbf"/><rect x="825.3" y="964.9" width="10.5" height="10.4" fill="#ffb7ba"/><rect x="835.2" y="964.9" width="10.5" height="10.4" fill="#ffb2b6"/><rect x="845.1" y="964.9" width="10.5" height="10.4" fill="#ffaeb2"/><rect x="556.9" y="974.7" width="10.5" height="10.4" fill="#a2f6ff"/><rect x="566.9" y="974.7" width="10.5" height="10.4" fill="#a8f6ff"/><rect x="576.8" y="974.7" width="10.5" height="10.4" fill="#aef6ff"/><rect x="586.7" y="974.7" width="10.5" height="10.4" fill="#b4f6ff"/><rect x="596.7" y="974.7" width="10.5" height="10.4" fill="#baf6ff"/><rect x="606.6" y="974.7" width="10.5" height="10.4" fill="#c0f6ff"/><rect x="616.6" y="974.7" width="10.5" height="10.4" fill="#c6f6ff"/><rect x="626.5" y="974.7" width="10.5" height="10.4" fill="#cdf5ff"/><rect x="636.4" y="974.7" width="10.5" height="10.4" fill="#d3f5ff"/><rect x="646.4" y="974.7" width="10.5" height="10.4" fill="#daf5ff"/><rect x="656.3" y="974.7" width="10.5" height="10.4" fill="#e0f5ff"/><rect x="666.2" y="974.7" width="10.5" height="10.4" fill="#e7f5ff"/><rect x="676.2" y="974.7" width="10.5" height="10.4" fill="#eef5ff"/><rect x="686.1" y="974.7" width="10.5" height="10.4" fill="#f4f5ff"/><rect x="696.1" y="974.7" width="10.5" height="10.4" fill="#fbf5ff"/><rect x="706.0" y="974.7" width="10.5" height="10.4" fill="#fff2fc"/><rect x="715.9" y="974.7" width="10.5" height="10.4" fill="#ffecf5"/><rect x="725.9" y="974.7" width="10.5" height="10.4" fill="#ffe5ef"/><rect x="735.8" y="974.7" width="10.5" height="10.4" fill="#ffdfe9"/><rect x="745.8" y="974.7" width="10.5" height="10.4" fill="#ffdae3"/><rect x="755.7" y="974.7" width="10.5" height="10.4" fill="#ffd4dd"/><rect x="765.6" y="974.7" width="10.5" height="10.4" fill="#ffcfd8"/><rect x="775.6" y="974.7" width="10.5" height="10.4" fill="#ffcad3"/><rect x="785.5" y="974.7" width="10.5" height="10.4" fill="#ffc5ce"/><rect x="795.4" y="974.7" width="10.5" height="10.4" fill="#ffc0c9"/><rect x="805.4" y="974.7" width="10.5" height="10.4" fill="#ffbcc4"/><rect x="815.3" y="974.7" width="10.5" height="10.4" fill="#ffb7bf"/><rect x="825.3" y="974.7" width="10.5" height="10.4" fill="#ffb3bb"/><rect x="835.2" y="974.7" width="10.5" height="10.4" fill="#ffafb7"/><rect x="845.1" y="974.7" width="10.5" height="10.4" fill="#ffabb3"/><rect x="556.9" y="984.5" width="10.5" height="10.4" fill="#a2f1ff"/><rect x="566.9" y="984.5" width="10.5" height="10.4" fill="#a8f1ff"/><rect x="576.8" y="984.5" width="10.5" height="10.4" fill="#aef1ff"/><rect x="586.7" y="984.5" width="10.5" height="10.4" fill="#b4f1ff"/><rect x="596.7" y="984.5" width="10.5" height="10.4" fill="#baf1ff"/><rect x="606.6" y="984.5" width="10.5" height="10.4" fill="#c0f1ff"/><rect x="616.6" y="984.5" width="10.5" height="10.4" fill="#c7f0ff"/><rect x="626.5" y="984.5" width="10.5" height="10.4" fill="#cdf0ff"/><rect x="636.4" y="984.5" width="10.5" height="10.4" fill="#d3f0ff"/><rect x="646.4" y="984.5" width="10.5" height="10.4" fill="#daf0ff"/><rect x="656.3" y="984.5" width="10.5" height="10.4" fill="#e0f0ff"/><rect x="666.2" y="984.5" width="10.5" height="10.4" fill="#e7f0ff"/><rect x="676.2" y="984.5" width="10.5" height="10.4" fill="#edf0ff"/><rect x="686.1" y="984.5" width="10.5" height="10.4" fill="#f4f0ff"/><rect x="696.1" y="984.5" width="10.5" height="10.4" fill="#fbf0ff"/><rect x="706.0" y="984.5" width="10.5" height="10.4" fill="#ffedfc"/><rect x="715.9" y="984.5" width="10.5" height="10.4" fill="#ffe7f6"/><rect x="725.9" y="984.5" width="10.5" height="10.4" fill="#ffe1ef"/><rect x="735.8" y="984.5" width="10.5" height="10.4" fill="#ffdbe9"/><rect x="745.8" y="984.5" width="10.5" height="10.4" fill="#ffd5e3"/><rect x="755.7" y="984.5" width="10.5" height="10.4" fill="#ffd0de"/><rect x="765.6" y="984.5" width="10.5" height="10.4" fill="#ffcbd8"/><rect x="775.6" y="984.5" width="10.5" height="10.4" fill="#ffc6d3"/><rect x="785.5" y="984.5" width="10.5" height="10.4" fill="#ffc1ce"/><rect x="795.4" y="984.5" width="10.5" height="10.4" fill="#ffbcc9"/><rect x="805.4" y="984.5" width="10.5" height="10.4" fill="#ffb8c5"/><rect x="815.3" y="984.5" width="10.5" height="10.4" fill="#ffb4c0"/><rect x="825.3" y="984.5" width="10.5" height="10.4" fill="#ffafbc"/><rect x="835.2" y="984.5" width="10.5" height="10.4" fill="#ffabb7"/><rect x="845.1" y="984.5" width="10.5" height="10.4" fill="#ffa7b3"/><rect x="556.9" y="994.3" width="10.5" height="10.4" fill="#a3ecff"/><rect x="566.9" y="994.3" width="10.5" height="10.4" fill="#a9ecff"/><rect x="576.8" y="994.3" width="10.5" height="10.4" fill="#aeecff"/><rect x="586.7" y="994.3" width="10.5" height="10.4" fill="#b4ecff"/><rect x="596.7" y="994.3" width="10.5" height="10.4" fill="#baecff"/><rect x="606.6" y="994.3" width="10.5" height="10.4" fill="#c0ecff"/><rect x="616.6" y="994.3" width="10.5" height="10.4" fill="#c7ebff"/><rect x="626.5" y="994.3" width="10.5" height="10.4" fill="#cdebff"/><rect x="636.4" y="994.3" width="10.5" height="10.4" fill="#d3ebff"/><rect x="646.4" y="994.3" width="10.5" height="10.4" fill="#daebff"/><rect x="656.3" y="994.3" width="10.5" height="10.4" fill="#e0ebff"/><rect x="666.2" y="994.3" width="10.5" height="10.4" fill="#e6ebff"/><rect x="676.2" y="994.3" width="10.5" height="10.4" fill="#edebff"/><rect x="686.1" y="994.3" width="10.5" height="10.4" fill="#f4ebff"/><rect x="696.1" y="994.3" width="10.5" height="10.4" fill="#faeaff"/><rect x="706.0" y="994.3" width="10.5" height="10.4" fill="#ffe8fd"/><rect x="715.9" y="994.3" width="10.5" height="10.4" fill="#ffe2f6"/><rect x="725.9" y="994.3" width="10.5" height="10.4" fill="#ffdcf0"/><rect x="735.8" y="994.3" width="10.5" height="10.4" fill="#ffd6ea"/><rect x="745.8" y="994.3" width="10.5" height="10.4" fill="#ffd1e4"/><rect x="755.7" y="994.3" width="10.5" height="10.4" fill="#ffccde"/><rect x="765.6" y="994.3" width="10.5" height="10.4" fill="#ffc7d9"/><rect x="775.6" y="994.3" width="10.5" height="10.4" fill="#ffc2d4"/><rect x="785.5" y="994.3" width="10.5" height="10.4" fill="#ffbdcf"/><rect x="795.4" y="994.3" width="10.5" height="10.4" fill="#ffb9ca"/><rect x="805.4" y="994.3" width="10.5" height="10.4" fill="#ffb4c5"/><rect x="815.3" y="994.3" width="10.5" height="10.4" fill="#ffb0c1"/><rect x="825.3" y="994.3" width="10.5" height="10.4" fill="#ffacbc"/><rect x="835.2" y="994.3" width="10.5" height="10.4" fill="#ffa8b8"/><rect x="845.1" y="994.3" width="10.5" height="10.4" fill="#ffa4b4"/><rect x="556.9" y="1004.1" width="10.5" height="10.4" fill="#a3e7ff"/><rect x="566.9" y="1004.1" width="10.5" height="10.4" fill="#a9e7ff"/><rect x="576.8" y="1004.1" width="10.5" height="10.4" fill="#afe7ff"/><rect x="586.7" y="1004.1" width="10.5" height="10.4" fill="#b5e7ff"/><rect x="596.7" y="1004.1" width="10.5" height="10.4" fill="#bbe7ff"/><rect x="606.6" y="1004.1" width="10.5" height="10.4" fill="#c1e7ff"/><rect x="616.6" y="1004.1" width="10.5" height="10.4" fill="#c7e6ff"/><rect x="626.5" y="1004.1" width="10.5" height="10.4" fill="#cde6ff"/><rect x="636.4" y="1004.1" width="10.5" height="10.4" fill="#d3e6ff"/><rect x="646.4" y="1004.1" width="10.5" height="10.4" fill="#d9e6ff"/><rect x="656.3" y="1004.1" width="10.5" height="10.4" fill="#e0e6ff"/><rect x="666.2" y="1004.1" width="10.5" height="10.4" fill="#e6e6ff"/><rect x="676.2" y="1004.1" width="10.5" height="10.4" fill="#ede6ff"/><rect x="686.1" y="1004.1" width="10.5" height="10.4" fill="#f3e5ff"/><rect x="696.1" y="1004.1" width="10.5" height="10.4" fill="#fae5ff"/><rect x="706.0" y="1004.1" width="10.5" height="10.4" fill="#ffe4fd"/><rect x="715.9" y="1004.1" width="10.5" height="10.4" fill="#ffddf7"/><rect x="725.9" y="1004.1" width="10.5" height="10.4" fill="#ffd8f0"/><rect x="735.8" y="1004.1" width="10.5" height="10.4" fill="#ffd2ea"/><rect x="745.8" y="1004.1" width="10.5" height="10.4" fill="#ffcde5"/><rect x="755.7" y="1004.1" width="10.5" height="10.4" fill="#ffc8df"/><rect x="765.6" y="1004.1" width="10.5" height="10.4" fill="#ffc3da"/><rect x="775.6" y="1004.1" width="10.5" height="10.4" fill="#ffbed4"/><rect x="785.5" y="1004.1" width="10.5" height="10.4" fill="#ffb9cf"/><rect x="795.4" y="1004.1" width="10.5" height="10.4" fill="#ffb5cb"/><rect x="805.4" y="1004.1" width="10.5" height="10.4" fill="#ffb1c6"/><rect x="815.3" y="1004.1" width="10.5" height="10.4" fill="#ffacc1"/><rect x="825.3" y="1004.1" width="10.5" height="10.4" fill="#ffa8bd"/><rect x="835.2" y="1004.1" width="10.5" height="10.4" fill="#ffa4b9"/><rect x="845.1" y="1004.1" width="10.5" height="10.4" fill="#ffa1b5"/><rect x="556.9" y="1013.8" width="10.5" height="10.4" fill="#a3e3ff"/><rect x="566.9" y="1013.8" width="10.5" height="10.4" fill="#a9e2ff"/><rect x="576.8" y="1013.8" width="10.5" height="10.4" fill="#afe2ff"/><rect x="586.7" y="1013.8" width="10.5" height="10.4" fill="#b5e2ff"/><rect x="596.7" y="1013.8" width="10.5" height="10.4" fill="#bbe2ff"/><rect x="606.6" y="1013.8" width="10.5" height="10.4" fill="#c1e2ff"/><rect x="616.6" y="1013.8" width="10.5" height="10.4" fill="#c7e2ff"/><rect x="626.5" y="1013.8" width="10.5" height="10.4" fill="#cde1ff"/><rect x="636.4" y="1013.8" width="10.5" height="10.4" fill="#d3e1ff"/><rect x="646.4" y="1013.8" width="10.5" height="10.4" fill="#d9e1ff"/><rect x="656.3" y="1013.8" width="10.5" height="10.4" fill="#e0e1ff"/><rect x="666.2" y="1013.8" width="10.5" height="10.4" fill="#e6e1ff"/><rect x="676.2" y="1013.8" width="10.5" height="10.4" fill="#ede1ff"/><rect x="686.1" y="1013.8" width="10.5" height="10.4" fill="#f3e0ff"/><rect x="696.1" y="1013.8" width="10.5" height="10.4" fill="#fae0ff"/><rect x="706.0" y="1013.8" width="10.5" height="10.4" fill="#ffdffe"/><rect x="715.9" y="1013.8" width="10.5" height="10.4" fill="#ffd9f7"/><rect x="725.9" y="1013.8" width="10.5" height="10.4" fill="#ffd3f1"/><rect x="735.8" y="1013.8" width="10.5" height="10.4" fill="#ffceeb"/><rect x="745.8" y="1013.8" width="10.5" height="10.4" fill="#ffc9e5"/><rect x="755.7" y="1013.8" width="10.5" height="10.4" fill="#ffc4df"/><rect x="765.6" y="1013.8" width="10.5" height="10.4" fill="#ffbfda"/><rect x="775.6" y="1013.8" width="10.5" height="10.4" fill="#ffbad5"/><rect x="785.5" y="1013.8" width="10.5" height="10.4" fill="#ffb5d0"/><rect x="795.4" y="1013.8" width="10.5" height="10.4" fill="#ffb1cb"/><rect x="805.4" y="1013.8" width="10.5" height="10.4" fill="#ffadc7"/><rect x="815.3" y="1013.8" width="10.5" height="10.4" fill="#ffa9c2"/><rect x="825.3" y="1013.8" width="10.5" height="10.4" fill="#ffa5be"/><rect x="835.2" y="1013.8" width="10.5" height="10.4" fill="#ffa1ba"/><rect x="845.1" y="1013.8" width="10.5" height="10.4" fill="#ff9db5"/><rect x="556.9" y="1023.6" width="10.5" height="10.4" fill="#a4deff"/><rect x="566.9" y="1023.6" width="10.5" height="10.4" fill="#a9deff"/><rect x="576.8" y="1023.6" width="10.5" height="10.4" fill="#afdeff"/><rect x="586.7" y="1023.6" width="10.5" height="10.4" fill="#b5ddff"/><rect x="596.7" y="1023.6" width="10.5" height="10.4" fill="#bbddff"/><rect x="606.6" y="1023.6" width="10.5" height="10.4" fill="#c1ddff"/><rect x="616.6" y="1023.6" width="10.5" height="10.4" fill="#c7ddff"/><rect x="626.5" y="1023.6" width="10.5" height="10.4" fill="#cdddff"/><rect x="636.4" y="1023.6" width="10.5" height="10.4" fill="#d3dcff"/><rect x="646.4" y="1023.6" width="10.5" height="10.4" fill="#d9dcff"/><rect x="656.3" y="1023.6" width="10.5" height="10.4" fill="#e0dcff"/><rect x="666.2" y="1023.6" width="10.5" height="10.4" fill="#e6dcff"/><rect x="676.2" y="1023.6" width="10.5" height="10.4" fill="#ecdcff"/><rect x="686.1" y="1023.6" width="10.5" height="10.4" fill="#f3dbff"/><rect x="696.1" y="1023.6" width="10.5" height="10.4" fill="#f9dbff"/><rect x="706.0" y="1023.6" width="10.5" height="10.4" fill="#ffdafe"/><rect x="715.9" y="1023.6" width="10.5" height="10.4" fill="#ffd4f8"/><rect x="725.9" y="1023.6" width="10.5" height="10.4" fill="#ffcff1"/><rect x="735.8" y="1023.6" width="10.5" height="10.4" fill="#ffcaeb"/><rect x="745.8" y="1023.6" width="10.5" height="10.4" fill="#ffc4e6"/><rect x="755.7" y="1023.6" width="10.5" height="10.4" fill="#ffbfe0"/><rect x="765.6" y="1023.6" width="10.5" height="10.4" fill="#ffbbdb"/><rect x="775.6" y="1023.6" width="10.5" height="10.4" fill="#ffb6d6"/><rect x="785.5" y="1023.6" width="10.5" height="10.4" fill="#ffb2d1"/><rect x="795.4" y="1023.6" width="10.5" height="10.4" fill="#ffadcc"/><rect x="805.4" y="1023.6" width="10.5" height="10.4" fill="#ffa9c7"/><rect x="815.3" y="1023.6" width="10.5" height="10.4" fill="#ffa5c3"/><rect x="825.3" y="1023.6" width="10.5" height="10.4" fill="#ffa1be"/><rect x="835.2" y="1023.6" width="10.5" height="10.4" fill="#ff9eba"/><rect x="845.1" y="1023.6" width="10.5" height="10.4" fill="#ff9ab6"/><rect x="556.9" y="1033.4" width="10.5" height="10.4" fill="#a4d9ff"/><rect x="566.9" y="1033.4" width="10.5" height="10.4" fill="#aad9ff"/><rect x="576.8" y="1033.4" width="10.5" height="10.4" fill="#b0d9ff"/><rect x="586.7" y="1033.4" width="10.5" height="10.4" fill="#b5d9ff"/><rect x="596.7" y="1033.4" width="10.5" height="10.4" fill="#bbd9ff"/><rect x="606.6" y="1033.4" width="10.5" height="10.4" fill="#c1d8ff"/><rect x="616.6" y="1033.4" width="10.5" height="10.4" fill="#c7d8ff"/><rect x="626.5" y="1033.4" width="10.5" height="10.4" fill="#cdd8ff"/><rect x="636.4" y="1033.4" width="10.5" height="10.4" fill="#d3d8ff"/><rect x="646.4" y="1033.4" width="10.5" height="10.4" fill="#d9d7ff"/><rect x="656.3" y="1033.4" width="10.5" height="10.4" fill="#e0d7ff"/><rect x="666.2" y="1033.4" width="10.5" height="10.4" fill="#e6d7ff"/><rect x="676.2" y="1033.4" width="10.5" height="10.4" fill="#ecd7ff"/><rect x="686.1" y="1033.4" width="10.5" height="10.4" fill="#f3d7ff"/><rect x="696.1" y="1033.4" width="10.5" height="10.4" fill="#f9d6ff"/><rect x="706.0" y="1033.4" width="10.5" height="10.4" fill="#ffd6fe"/><rect x="715.9" y="1033.4" width="10.5" height="10.4" fill="#ffd0f8"/><rect x="725.9" y="1033.4" width="10.5" height="10.4" fill="#ffcaf2"/><rect x="735.8" y="1033.4" width="10.5" height="10.4" fill="#ffc5ec"/><rect x="745.8" y="1033.4" width="10.5" height="10.4" fill="#ffc0e6"/><rect x="755.7" y="1033.4" width="10.5" height="10.4" fill="#ffbbe1"/><rect x="765.6" y="1033.4" width="10.5" height="10.4" fill="#ffb7db"/><rect x="775.6" y="1033.4" width="10.5" height="10.4" fill="#ffb2d6"/><rect x="785.5" y="1033.4" width="10.5" height="10.4" fill="#ffaed1"/><rect x="795.4" y="1033.4" width="10.5" height="10.4" fill="#ffaacc"/><rect x="805.4" y="1033.4" width="10.5" height="10.4" fill="#ffa6c8"/><rect x="815.3" y="1033.4" width="10.5" height="10.4" fill="#ffa2c3"/><rect x="825.3" y="1033.4" width="10.5" height="10.4" fill="#ff9ebf"/><rect x="835.2" y="1033.4" width="10.5" height="10.4" fill="#ff9abb"/><rect x="845.1" y="1033.4" width="10.5" height="10.4" fill="#ff97b7"/><rect x="556.9" y="1043.2" width="10.5" height="10.4" fill="#a4d5ff"/><rect x="566.9" y="1043.2" width="10.5" height="10.4" fill="#aad5ff"/><rect x="576.8" y="1043.2" width="10.5" height="10.4" fill="#b0d4ff"/><rect x="586.7" y="1043.2" width="10.5" height="10.4" fill="#b6d4ff"/><rect x="596.7" y="1043.2" width="10.5" height="10.4" fill="#bbd4ff"/><rect x="606.6" y="1043.2" width="10.5" height="10.4" fill="#c1d4ff"/><rect x="616.6" y="1043.2" width="10.5" height="10.4" fill="#c7d3ff"/><rect x="626.5" y="1043.2" width="10.5" height="10.4" fill="#cdd3ff"/><rect x="636.4" y="1043.2" width="10.5" height="10.4" fill="#d3d3ff"/><rect x="646.4" y="1043.2" width="10.5" height="10.4" fill="#d9d3ff"/><rect x="656.3" y="1043.2" width="10.5" height="10.4" fill="#dfd2ff"/><rect x="666.2" y="1043.2" width="10.5" height="10.4" fill="#e6d2ff"/><rect x="676.2" y="1043.2" width="10.5" height="10.4" fill="#ecd2ff"/><rect x="686.1" y="1043.2" width="10.5" height="10.4" fill="#f2d2ff"/><rect x="696.1" y="1043.2" width="10.5" height="10.4" fill="#f9d1ff"/><rect x="706.0" y="1043.2" width="10.5" height="10.4" fill="#ffd1ff"/><rect x="715.9" y="1043.2" width="10.5" height="10.4" fill="#ffccf8"/><rect x="725.9" y="1043.2" width="10.5" height="10.4" fill="#ffc6f2"/><rect x="735.8" y="1043.2" width="10.5" height="10.4" fill="#ffc1ec"/><rect x="745.8" y="1043.2" width="10.5" height="10.4" fill="#ffbce7"/><rect x="755.7" y="1043.2" width="10.5" height="10.4" fill="#ffb8e1"/><rect x="765.6" y="1043.2" width="10.5" height="10.4" fill="#ffb3dc"/><rect x="775.6" y="1043.2" width="10.5" height="10.4" fill="#ffafd7"/><rect x="785.5" y="1043.2" width="10.5" height="10.4" fill="#ffaad2"/><rect x="795.4" y="1043.2" width="10.5" height="10.4" fill="#ffa6cd"/><rect x="805.4" y="1043.2" width="10.5" height="10.4" fill="#ffa2c8"/><rect x="815.3" y="1043.2" width="10.5" height="10.4" fill="#ff9ec4"/><rect x="825.3" y="1043.2" width="10.5" height="10.4" fill="#ff9bc0"/><rect x="835.2" y="1043.2" width="10.5" height="10.4" fill="#ff97bc"/><rect x="845.1" y="1043.2" width="10.5" height="10.4" fill="#ff94b7"/><rect x="556.9" y="1053.0" width="10.5" height="10.4" fill="#a5d0ff"/><rect x="566.9" y="1053.0" width="10.5" height="10.4" fill="#aad0ff"/><rect x="576.8" y="1053.0" width="10.5" height="10.4" fill="#b0d0ff"/><rect x="586.7" y="1053.0" width="10.5" height="10.4" fill="#b6d0ff"/><rect x="596.7" y="1053.0" width="10.5" height="10.4" fill="#bbcfff"/><rect x="606.6" y="1053.0" width="10.5" height="10.4" fill="#c1cfff"/><rect x="616.6" y="1053.0" width="10.5" height="10.4" fill="#c7cfff"/><rect x="626.5" y="1053.0" width="10.5" height="10.4" fill="#cdcfff"/><rect x="636.4" y="1053.0" width="10.5" height="10.4" fill="#d3ceff"/><rect x="646.4" y="1053.0" width="10.5" height="10.4" fill="#d9ceff"/><rect x="656.3" y="1053.0" width="10.5" height="10.4" fill="#dfceff"/><rect x="666.2" y="1053.0" width="10.5" height="10.4" fill="#e5ceff"/><rect x="676.2" y="1053.0" width="10.5" height="10.4" fill="#eccdff"/><rect x="686.1" y="1053.0" width="10.5" height="10.4" fill="#f2cdff"/><rect x="696.1" y="1053.0" width="10.5" height="10.4" fill="#f8cdff"/><rect x="706.0" y="1053.0" width="10.5" height="10.4" fill="#ffccff"/><rect x="715.9" y="1053.0" width="10.5" height="10.4" fill="#ffc7f9"/><rect x="725.9" y="1053.0" width="10.5" height="10.4" fill="#ffc2f3"/><rect x="735.8" y="1053.0" width="10.5" height="10.4" fill="#ffbded"/><rect x="745.8" y="1053.0" width="10.5" height="10.4" fill="#ffb8e7"/><rect x="755.7" y="1053.0" width="10.5" height="10.4" fill="#ffb4e2"/><rect x="765.6" y="1053.0" width="10.5" height="10.4" fill="#ffafdc"/><rect x="775.6" y="1053.0" width="10.5" height="10.4" fill="#ffabd7"/><rect x="785.5" y="1053.0" width="10.5" height="10.4" fill="#ffa7d2"/><rect x="795.4" y="1053.0" width="10.5" height="10.4" fill="#ffa3ce"/><rect x="805.4" y="1053.0" width="10.5" height="10.4" fill="#ff9fc9"/><rect x="815.3" y="1053.0" width="10.5" height="10.4" fill="#ff9bc5"/><rect x="825.3" y="1053.0" width="10.5" height="10.4" fill="#ff97c0"/><rect x="835.2" y="1053.0" width="10.5" height="10.4" fill="#ff94bc"/><rect x="845.1" y="1053.0" width="10.5" height="10.4" fill="#ff91b8"/><rect x="556.9" y="1062.8" width="10.5" height="10.4" fill="#a5ccff"/><rect x="566.9" y="1062.8" width="10.5" height="10.4" fill="#abccff"/><rect x="576.8" y="1062.8" width="10.5" height="10.4" fill="#b0cbff"/><rect x="586.7" y="1062.8" width="10.5" height="10.4" fill="#b6cbff"/><rect x="596.7" y="1062.8" width="10.5" height="10.4" fill="#bccbff"/><rect x="606.6" y="1062.8" width="10.5" height="10.4" fill="#c1cbff"/><rect x="616.6" y="1062.8" width="10.5" height="10.4" fill="#c7caff"/><rect x="626.5" y="1062.8" width="10.5" height="10.4" fill="#cdcaff"/><rect x="636.4" y="1062.8" width="10.5" height="10.4" fill="#d3caff"/><rect x="646.4" y="1062.8" width="10.5" height="10.4" fill="#d9caff"/><rect x="656.3" y="1062.8" width="10.5" height="10.4" fill="#dfc9ff"/><rect x="666.2" y="1062.8" width="10.5" height="10.4" fill="#e5c9ff"/><rect x="676.2" y="1062.8" width="10.5" height="10.4" fill="#ecc9ff"/><rect x="686.1" y="1062.8" width="10.5" height="10.4" fill="#f2c8ff"/><rect x="696.1" y="1062.8" width="10.5" height="10.4" fill="#f8c8ff"/><rect x="706.0" y="1062.8" width="10.5" height="10.4" fill="#ffc8ff"/><rect x="715.9" y="1062.8" width="10.5" height="10.4" fill="#ffc3f9"/><rect x="725.9" y="1062.8" width="10.5" height="10.4" fill="#ffbef3"/><rect x="735.8" y="1062.8" width="10.5" height="10.4" fill="#ffb9ed"/><rect x="745.8" y="1062.8" width="10.5" height="10.4" fill="#ffb4e8"/><rect x="755.7" y="1062.8" width="10.5" height="10.4" fill="#ffb0e2"/><rect x="765.6" y="1062.8" width="10.5" height="10.4" fill="#ffabdd"/><rect x="775.6" y="1062.8" width="10.5" height="10.4" fill="#ffa7d8"/><rect x="785.5" y="1062.8" width="10.5" height="10.4" fill="#ffa3d3"/><rect x="795.4" y="1062.8" width="10.5" height="10.4" fill="#ff9fce"/><rect x="805.4" y="1062.8" width="10.5" height="10.4" fill="#ff9bca"/><rect x="815.3" y="1062.8" width="10.5" height="10.4" fill="#ff98c5"/><rect x="825.3" y="1062.8" width="10.5" height="10.4" fill="#ff94c1"/><rect x="835.2" y="1062.8" width="10.5" height="10.4" fill="#ff91bd"/><rect x="845.1" y="1062.8" width="10.5" height="10.4" fill="#ff8db9"/><rect x="556.9" y="1072.6" width="10.5" height="10.4" fill="#a6c8ff"/><rect x="566.9" y="1072.6" width="10.5" height="10.4" fill="#abc7ff"/><rect x="576.8" y="1072.6" width="10.5" height="10.4" fill="#b1c7ff"/><rect x="586.7" y="1072.6" width="10.5" height="10.4" fill="#b6c7ff"/><rect x="596.7" y="1072.6" width="10.5" height="10.4" fill="#bcc7ff"/><rect x="606.6" y="1072.6" width="10.5" height="10.4" fill="#c2c6ff"/><rect x="616.6" y="1072.6" width="10.5" height="10.4" fill="#c7c6ff"/><rect x="626.5" y="1072.6" width="10.5" height="10.4" fill="#cdc6ff"/><rect x="636.4" y="1072.6" width="10.5" height="10.4" fill="#d3c5ff"/><rect x="646.4" y="1072.6" width="10.5" height="10.4" fill="#d9c5ff"/><rect x="656.3" y="1072.6" width="10.5" height="10.4" fill="#dfc5ff"/><rect x="666.2" y="1072.6" width="10.5" height="10.4" fill="#e5c4ff"/><rect x="676.2" y="1072.6" width="10.5" height="10.4" fill="#ebc4ff"/><rect x="686.1" y="1072.6" width="10.5" height="10.4" fill="#f2c4ff"/><rect x="696.1" y="1072.6" width="10.5" height="10.4" fill="#f8c3ff"/><rect x="706.0" y="1072.6" width="10.5" height="10.4" fill="#fec3ff"/><rect x="715.9" y="1072.6" width="10.5" height="10.4" fill="#ffbffa"/><rect x="725.9" y="1072.6" width="10.5" height="10.4" fill="#ffbaf3"/><rect x="735.8" y="1072.6" width="10.5" height="10.4" fill="#ffb5ee"/><rect x="745.8" y="1072.6" width="10.5" height="10.4" fill="#ffb0e8"/><rect x="755.7" y="1072.6" width="10.5" height="10.4" fill="#fface3"/><rect x="765.6" y="1072.6" width="10.5" height="10.4" fill="#ffa8dd"/><rect x="775.6" y="1072.6" width="10.5" height="10.4" fill="#ffa4d8"/><rect x="785.5" y="1072.6" width="10.5" height="10.4" fill="#ffa0d4"/><rect x="795.4" y="1072.6" width="10.5" height="10.4" fill="#ff9ccf"/><rect x="805.4" y="1072.6" width="10.5" height="10.4" fill="#ff98ca"/><rect x="815.3" y="1072.6" width="10.5" height="10.4" fill="#ff94c6"/><rect x="825.3" y="1072.6" width="10.5" height="10.4" fill="#ff91c2"/><rect x="835.2" y="1072.6" width="10.5" height="10.4" fill="#ff8ebd"/><rect x="845.1" y="1072.6" width="10.5" height="10.4" fill="#ff8ab9"/></g></g>
<rect x="576.8" y="857.2" width="258.4000000000001" height="205.5999999999999" fill="none" stroke="#9a9a9a" stroke-width="1.6"/>
<polyline points="606,1064.5 609.7,1061.9 665,1016.4 713.7,977.4 762.4,941.7 794.9,919 836,889.8" fill="none" stroke="#000" stroke-width="3.2" stroke-linejoin="round" clip-path="url(#cc)"/>
<ellipse cx="656.5" cy="983.9" rx="4.5" ry="5.6" fill="#151515"/>
<ellipse cx="686.1" cy="953.9" rx="4.3" ry="5.3" fill="#6a6a6a" stroke="#2a2a2a" stroke-width="0.9"/>
<ellipse cx="689.3" cy="949" rx="4.3" ry="5.3" fill="#6a6a6a" stroke="#2a2a2a" stroke-width="0.9"/>
<ellipse cx="688.5" cy="962" rx="4.3" ry="5.3" fill="#6a6a6a" stroke="#2a2a2a" stroke-width="0.9"/>
<ellipse cx="693.4" cy="959.6" rx="4.3" ry="5.3" fill="#6a6a6a" stroke="#2a2a2a" stroke-width="0.9"/>
<ellipse cx="691" cy="953.9" rx="3.8" ry="4.9" fill="#ffffff" stroke="#111" stroke-width="1"/>
<rect x="699.2" y="950.5" width="12.7" height="16.2" fill="#fff" stroke="#000" stroke-width="2"/>
<line x1="587.7" y1="1063.6" x2="587.7" y2="1068" stroke="#c8c8c8" stroke-width="1.3"/>
<text transform="translate(587.70,1090.60) scale(0.9200,1)" font-size="17" fill="#d4d4d4" text-anchor="middle">0.29</text>
<line x1="639.6" y1="1063.6" x2="639.6" y2="1068" stroke="#c8c8c8" stroke-width="1.3"/>
<text transform="translate(639.60,1090.60) scale(0.9200,1)" font-size="17" fill="#d4d4d4" text-anchor="middle">0.3</text>
<line x1="691.5" y1="1063.6" x2="691.5" y2="1068" stroke="#c8c8c8" stroke-width="1.3"/>
<text transform="translate(691.50,1090.60) scale(0.9200,1)" font-size="17" fill="#d4d4d4" text-anchor="middle">0.31</text>
<line x1="743.4" y1="1063.6" x2="743.4" y2="1068" stroke="#c8c8c8" stroke-width="1.3"/>
<text transform="translate(743.40,1090.60) scale(0.9200,1)" font-size="17" fill="#d4d4d4" text-anchor="middle">0.32</text>
<line x1="795.3" y1="1063.6" x2="795.3" y2="1068" stroke="#c8c8c8" stroke-width="1.3"/>
<text transform="translate(795.30,1090.60) scale(0.9200,1)" font-size="17" fill="#d4d4d4" text-anchor="middle">0.33</text>
<line x1="570" y1="915.4" x2="576.8" y2="915.4" stroke="#c8c8c8" stroke-width="1.3"/>
<text transform="translate(569.50,923.40) scale(0.9200,1)" font-size="17" fill="#d4d4d4" text-anchor="end">0.34</text>
<line x1="570" y1="999.6" x2="576.8" y2="999.6" stroke="#c8c8c8" stroke-width="1.3"/>
<text transform="translate(569.50,1007.60) scale(0.9200,1)" font-size="17" fill="#d4d4d4" text-anchor="end">0.32</text>
<rect x="848.2" y="821" width="1062.3" height="34.8" fill="url(#g45)"/>
<rect x="848.2" y="821" width="13.7" height="34.8" fill="#000000"/>
<rect x="848.2" y="855.8" width="1062.3" height="32.37" fill="#3c3c3c"/>
<rect x="848.2" y="855.8" width="13.7" height="32.37" fill="#1e1e1e"/>
<rect x="848.2" y="888.0" width="1062.3" height="32.37" fill="#7f7f7f"/>
<rect x="848.2" y="888.0" width="13.7" height="32.37" fill="#1e1e1e"/>
<rect x="848.2" y="920.1" width="1062.3" height="32.37" fill="#3c3c3c"/>
<rect x="848.2" y="920.1" width="13.7" height="32.37" fill="#1e1e1e"/>
<rect x="848.2" y="952.3" width="1062.3" height="32.37" fill="#7f7f7f"/>
<rect x="848.2" y="952.3" width="13.7" height="32.37" fill="#1e1e1e"/>
<rect x="848.2" y="984.5" width="1062.3" height="32.37" fill="#3c3c3c"/>
<rect x="848.2" y="984.5" width="13.7" height="32.37" fill="#1e1e1e"/>
<rect x="848.2" y="1016.6" width="1062.3" height="32.37" fill="#7f7f7f"/>
<rect x="848.2" y="1016.6" width="13.7" height="32.37" fill="#1e1e1e"/>
<rect x="848.2" y="1048.8" width="1062.3" height="32.37" fill="#3c3c3c"/>
<rect x="848.2" y="1048.8" width="13.7" height="32.37" fill="#1e1e1e"/>
<clipPath id="ct"><rect x="848.2" y="815" width="1062.3" height="270"/></clipPath>
<g clip-path="url(#ct)">
<text transform="translate(999.80,844.00) scale(0.8850,1)" font-size="18" fill="#ececec" text-anchor="start">0</text>
<text transform="translate(1095.20,844.00) scale(0.8850,1)" font-size="18" fill="#ececec" text-anchor="start">10</text>
<text transform="translate(1190.00,844.00) scale(0.8850,1)" font-size="18" fill="#ececec" text-anchor="start">20</text>
<text transform="translate(1276.00,844.00) scale(0.8850,1)" font-size="18" fill="#ececec" text-anchor="start">30</text>
<text transform="translate(1362.00,844.00) scale(0.8850,1)" font-size="18" fill="#ececec" text-anchor="start">40</text>
<text transform="translate(1448.40,844.00) scale(0.8850,1)" font-size="18" fill="#ececec" text-anchor="start">50</text>
<text transform="translate(1534.40,844.00) scale(0.8850,1)" font-size="18" fill="#ececec" text-anchor="start">60</text>
<text transform="translate(1620.40,844.00) scale(0.8850,1)" font-size="18" fill="#ececec" text-anchor="start">70</text>
<text transform="translate(1706.50,844.00) scale(0.8850,1)" font-size="18" fill="#ececec" text-anchor="start">80</text>
<text transform="translate(1792.50,844.00) scale(0.8850,1)" font-size="18" fill="#ececec" text-anchor="start">90</text>
<text transform="translate(1878.60,844.00) scale(0.8850,1)" font-size="18" fill="#ececec" text-anchor="start">100</text>
<text transform="translate(865.70,879.20) scale(0.8850,1)" font-size="18" fill="#ececec" text-anchor="start">x: CIE31</text>
<text transform="translate(999.80,879.20) scale(0.8850,1)" font-size="18" fill="#ececec" text-anchor="start">0.2704</text>
<text transform="translate(1095.20,879.20) scale(0.8850,1)" font-size="18" fill="#ececec" text-anchor="start">0.3033</text>
<text transform="translate(1190.00,879.20) scale(0.8850,1)" font-size="18" fill="#ececec" text-anchor="start">0.3102</text>
<text transform="translate(1276.00,879.20) scale(0.8850,1)" font-size="18" fill="#ececec" text-anchor="start">0.3095</text>
<text transform="translate(1362.00,879.20) scale(0.8850,1)" font-size="18" fill="#ececec" text-anchor="start">0.3091</text>
<text transform="translate(1448.40,879.20) scale(0.8850,1)" font-size="18" fill="#ececec" text-anchor="start">0.3098</text>
<text transform="translate(1534.40,879.20) scale(0.8850,1)" font-size="18" fill="#ececec" text-anchor="start">0.3097</text>
<text transform="translate(1620.40,879.20) scale(0.8850,1)" font-size="18" fill="#ececec" text-anchor="start">0.3099</text>
<text transform="translate(1706.50,879.20) scale(0.8850,1)" font-size="18" fill="#ececec" text-anchor="start">0.3098</text>
<text transform="translate(1792.50,879.20) scale(0.8850,1)" font-size="18" fill="#ececec" text-anchor="start">0.3099</text>
<text transform="translate(1878.60,879.20) scale(0.8850,1)" font-size="18" fill="#ececec" text-anchor="start">0.3100</text>
<text transform="translate(865.70,911.30) scale(0.8850,1)" font-size="18" fill="#ececec" text-anchor="start">y: CIE31</text>
<text transform="translate(999.80,911.30) scale(0.8850,1)" font-size="18" fill="#ececec" text-anchor="start">0.2744</text>
<text transform="translate(1095.20,911.30) scale(0.8850,1)" font-size="18" fill="#ececec" text-anchor="start">0.3230</text>
<text transform="translate(1190.00,911.30) scale(0.8850,1)" font-size="18" fill="#ececec" text-anchor="start">0.3290</text>
<text transform="translate(1276.00,911.30) scale(0.8850,1)" font-size="18" fill="#ececec" text-anchor="start">0.3283</text>
<text transform="translate(1362.00,911.30) scale(0.8850,1)" font-size="18" fill="#ececec" text-anchor="start">0.3304</text>
<text transform="translate(1448.40,911.30) scale(0.8850,1)" font-size="18" fill="#ececec" text-anchor="start">0.3313</text>
<text transform="translate(1534.40,911.30) scale(0.8850,1)" font-size="18" fill="#ececec" text-anchor="start">0.3305</text>
<text transform="translate(1620.40,911.30) scale(0.8850,1)" font-size="18" fill="#ececec" text-anchor="start">0.3292</text>
<text transform="translate(1706.50,911.30) scale(0.8850,1)" font-size="18" fill="#ececec" text-anchor="start">0.3299</text>
<text transform="translate(1792.50,911.30) scale(0.8850,1)" font-size="18" fill="#ececec" text-anchor="start">0.3300</text>
<text transform="translate(1878.60,911.30) scale(0.8850,1)" font-size="18" fill="#ececec" text-anchor="start">0.3330</text>
<text transform="translate(865.70,943.40) scale(0.8850,1)" font-size="18" fill="#ececec" text-anchor="start">Y</text>
<text transform="translate(999.80,943.40) scale(0.8850,1)" font-size="18" fill="#ececec" text-anchor="start">0.4234</text>
<text transform="translate(1095.20,943.40) scale(0.8850,1)" font-size="18" fill="#ececec" text-anchor="start">2.2899</text>
<text transform="translate(1190.00,943.40) scale(0.8850,1)" font-size="18" fill="#ececec" text-anchor="start">9.4973</text>
<text transform="translate(1276.00,943.40) scale(0.8850,1)" font-size="18" fill="#ececec" text-anchor="start">21.7621</text>
<text transform="translate(1362.00,943.40) scale(0.8850,1)" font-size="18" fill="#ececec" text-anchor="start">42.4887</text>
<text transform="translate(1448.40,943.40) scale(0.8850,1)" font-size="18" fill="#ececec" text-anchor="start">70.0533</text>
<text transform="translate(1534.40,943.40) scale(0.8850,1)" font-size="18" fill="#ececec" text-anchor="start">103.6393</text>
<text transform="translate(1620.40,943.40) scale(0.8850,1)" font-size="18" fill="#ececec" text-anchor="start">144.0005</text>
<text transform="translate(1706.50,943.40) scale(0.8850,1)" font-size="18" fill="#ececec" text-anchor="start">193.8307</text>
<text transform="translate(1792.50,943.40) scale(0.8850,1)" font-size="18" fill="#ececec" text-anchor="start">252.8639</text>
<text transform="translate(1878.60,943.40) scale(0.8850,1)" font-size="18" fill="#ececec" text-anchor="start">319.4488</text>
<text transform="translate(865.70,975.50) scale(0.8850,1)" font-size="18" fill="#ececec" text-anchor="start">Target Y</text>
<text transform="translate(999.80,975.50) scale(0.8850,1)" font-size="18" fill="#ececec" text-anchor="start">0.0000</text>
<text transform="translate(1095.20,975.50) scale(0.8850,1)" font-size="18" fill="#ececec" text-anchor="start">3.3001</text>
<text transform="translate(1190.00,975.50) scale(0.8850,1)" font-size="18" fill="#ececec" text-anchor="start">10.5760</text>
<text transform="translate(1276.00,975.50) scale(0.8850,1)" font-size="18" fill="#ececec" text-anchor="start">23.0888</text>
<rect x="1357.7" y="953.5" width="85.3" height="29.2" fill="#f4f4f4" stroke="#cfcfcf" stroke-width="1"/>
<text transform="translate(1362.00,975.50) scale(0.8850,1)" font-size="18" fill="#000000" text-anchor="start">42.4477</text>
<text transform="translate(1448.40,975.50) scale(0.8850,1)" font-size="18" fill="#ececec" text-anchor="start">68.9614</text>
<text transform="translate(1534.40,975.50) scale(0.8850,1)" font-size="18" fill="#ececec" text-anchor="start">101.7668</text>
<text transform="translate(1620.40,975.50) scale(0.8850,1)" font-size="18" fill="#ececec" text-anchor="start">142.2293</text>
<text transform="translate(1706.50,975.50) scale(0.8850,1)" font-size="18" fill="#ececec" text-anchor="start">192.9059</text>
<text transform="translate(1792.50,975.50) scale(0.8850,1)" font-size="18" fill="#ececec" text-anchor="start">252.7975</text>
<text transform="translate(1878.60,975.50) scale(0.8850,1)" font-size="18" fill="#ececec" text-anchor="start">319.4488</text>
<text transform="translate(865.70,1007.60) scale(0.8850,1)" font-size="18" fill="#ececec" text-anchor="start">Gamma Log/Log</text>
<text transform="translate(999.80,1007.60) scale(0.8850,1)" font-size="18" fill="#ececec" text-anchor="start">1.2778</text>
<text transform="translate(1095.20,1007.60) scale(0.8850,1)" font-size="18" fill="#ececec" text-anchor="start">2.1629</text>
<text transform="translate(1190.00,1007.60) scale(0.8850,1)" font-size="18" fill="#ececec" text-anchor="start">2.1844</text>
<text transform="translate(1276.00,1007.60) scale(0.8850,1)" font-size="18" fill="#ececec" text-anchor="start">2.2193</text>
<text transform="translate(1362.00,1007.60) scale(0.8850,1)" font-size="18" fill="#ececec" text-anchor="start">2.2017</text>
<text transform="translate(1448.40,1007.60) scale(0.8850,1)" font-size="18" fill="#ececec" text-anchor="start">2.2016</text>
<text transform="translate(1534.40,1007.60) scale(0.8850,1)" font-size="18" fill="#ececec" text-anchor="start">2.2038</text>
<text transform="translate(1620.40,1007.60) scale(0.8850,1)" font-size="18" fill="#ececec" text-anchor="start">2.2167</text>
<text transform="translate(1706.50,1007.60) scale(0.8850,1)" font-size="18" fill="#ececec" text-anchor="start">2.2393</text>
<text transform="translate(1792.50,1007.60) scale(0.8850,1)" font-size="18" fill="#ececec" text-anchor="start">2.2660</text>
<text transform="translate(1878.60,1007.60) scale(0.8850,1)" font-size="18" fill="#ececec" text-anchor="start">2.2740</text>
<text transform="translate(865.70,1039.70) scale(0.8850,1)" font-size="18" fill="#ececec" text-anchor="start">CCT</text>
<text transform="translate(999.80,1039.70) scale(0.8850,1)" font-size="18" fill="#ececec" text-anchor="start">12146.0000</text>
<text transform="translate(1095.20,1039.70) scale(0.8850,1)" font-size="18" fill="#ececec" text-anchor="start">7110.0000</text>
<text transform="translate(1190.00,1039.70) scale(0.8850,1)" font-size="18" fill="#ececec" text-anchor="start">6643.0000</text>
<text transform="translate(1276.00,1039.70) scale(0.8850,1)" font-size="18" fill="#ececec" text-anchor="start">6687.0000</text>
<text transform="translate(1362.00,1039.70) scale(0.8850,1)" font-size="18" fill="#ececec" text-anchor="start">6692.0000</text>
<text transform="translate(1448.40,1039.70) scale(0.8850,1)" font-size="18" fill="#ececec" text-anchor="start">6642.0000</text>
<text transform="translate(1534.40,1039.70) scale(0.8850,1)" font-size="18" fill="#ececec" text-anchor="start">6656.0000</text>
<text transform="translate(1620.40,1039.70) scale(0.8850,1)" font-size="18" fill="#ececec" text-anchor="start">6655.0000</text>
<text transform="translate(1706.50,1039.70) scale(0.8850,1)" font-size="18" fill="#ececec" text-anchor="start">6657.0000</text>
<text transform="translate(1792.50,1039.70) scale(0.8850,1)" font-size="18" fill="#ececec" text-anchor="start">6651.0000</text>
<text transform="translate(1878.60,1039.70) scale(0.8850,1)" font-size="18" fill="#ececec" text-anchor="start">6637.0000</text>
<text transform="translate(865.70,1071.80) scale(0.8850,1)" font-size="18" fill="#ececec" text-anchor="start">ΔE 2000</text>
<text transform="translate(999.80,1071.80) scale(0.8850,1)" font-size="18" fill="#ececec" text-anchor="start">1.2881</text>
<text transform="translate(1095.20,1071.80) scale(0.8850,1)" font-size="18" fill="#ececec" text-anchor="start">1.9110</text>
<text transform="translate(1190.00,1071.80) scale(0.8850,1)" font-size="18" fill="#ececec" text-anchor="start">1.1082</text>
<text transform="translate(1276.00,1071.80) scale(0.8850,1)" font-size="18" fill="#ececec" text-anchor="start">1.1583</text>
<text transform="translate(1362.00,1071.80) scale(0.8850,1)" font-size="18" fill="#ececec" text-anchor="start">1.9168</text>
<text transform="translate(1448.40,1071.80) scale(0.8850,1)" font-size="18" fill="#ececec" text-anchor="start">2.3296</text>
<text transform="translate(1534.40,1071.80) scale(0.8850,1)" font-size="18" fill="#ececec" text-anchor="start">2.3575</text>
<text transform="translate(1620.40,1071.80) scale(0.8850,1)" font-size="18" fill="#ececec" text-anchor="start">1.8059</text>
<text transform="translate(1706.50,1071.80) scale(0.8850,1)" font-size="18" fill="#ececec" text-anchor="start">2.4344</text>
<text transform="translate(1792.50,1071.80) scale(0.8850,1)" font-size="18" fill="#ececec" text-anchor="start">2.6494</text>
<text transform="translate(1878.60,1071.80) scale(0.8850,1)" font-size="18" fill="#ececec" text-anchor="start">3.0900</text>
</g>
<rect x="862" y="1080.8" width="1049" height="20.9" rx="3" fill="#595959"/>
<rect x="879.6" y="1082.5" width="966" height="17.9" rx="8.5" fill="#444444"/>
<rect x="863.5" y="1083.2" width="12.5" height="16" rx="2.5" fill="#7a7a7a" stroke="#666" stroke-width="1"/>
<path d="M866.7 1091.3 L873 1085.8 V1097 Z" fill="#444"/>
<rect x="1895.5" y="1083.2" width="12.5" height="16" rx="2.5" fill="#7a7a7a" stroke="#666" stroke-width="1"/>
<path d="M1905 1091.3 L1898.7 1085.8 V1097 Z" fill="#444"/>
<rect x="200" y="1107" width="1720" height="63" fill="#2b2b2b"/>
<rect x="200.8" y="1107.8" width="125.3" height="62" rx="5" fill="url(#g46)"/>
<rect x="206.0" y="1112.8" width="115.1" height="36.2" rx="3" fill="#000000" stroke="#111" stroke-opacity="0.35" stroke-width="1.2"/>
<text transform="translate(263.40,1163.50) scale(0.9000,1)" font-size="11" fill="#2a2a2a" text-anchor="middle">0</text>
<rect x="327.7" y="1107.8" width="125.3" height="62" rx="5" fill="url(#g46)"/>
<rect x="332.9" y="1112.8" width="115.1" height="36.2" rx="3" fill="#1a1a1a" stroke="#111" stroke-opacity="0.35" stroke-width="1.2"/>
<text transform="translate(390.30,1163.50) scale(0.9000,1)" font-size="11" fill="#2a2a2a" text-anchor="middle">10</text>
<rect x="454.6" y="1107.8" width="125.3" height="62" rx="5" fill="url(#g46)"/>
<rect x="459.8" y="1112.8" width="115.1" height="36.2" rx="3" fill="#333333" stroke="#111" stroke-opacity="0.35" stroke-width="1.2"/>
<text transform="translate(517.20,1163.50) scale(0.9000,1)" font-size="11" fill="#2a2a2a" text-anchor="middle">20</text>
<rect x="581.5" y="1107.8" width="125.3" height="62" rx="5" fill="url(#g46)"/>
<rect x="586.7" y="1112.8" width="115.1" height="36.2" rx="3" fill="#4c4c4c" stroke="#111" stroke-opacity="0.35" stroke-width="1.2"/>
<text transform="translate(644.10,1163.50) scale(0.9000,1)" font-size="11" fill="#2a2a2a" text-anchor="middle">30</text>
<rect x="708.4" y="1107.8" width="125.3" height="62" rx="5" fill="url(#g46)"/>
<rect x="713.6" y="1112.8" width="115.1" height="36.2" rx="3" fill="#666666" stroke="#111" stroke-opacity="0.35" stroke-width="1.2"/>
<text transform="translate(771.00,1163.50) scale(0.9000,1)" font-size="11" fill="#2a2a2a" text-anchor="middle">40</text>
<rect x="835.3" y="1107.8" width="125.3" height="62" rx="5" fill="url(#g46)"/>
<rect x="840.5" y="1112.8" width="115.1" height="36.2" rx="3" fill="#808080" stroke="#111" stroke-opacity="0.35" stroke-width="1.2"/>
<text transform="translate(897.90,1163.50) scale(0.9000,1)" font-size="11" fill="#2a2a2a" text-anchor="middle">50</text>
<rect x="962.2" y="1107.8" width="125.3" height="62" rx="5" fill="url(#g46)"/>
<rect x="967.4" y="1112.8" width="115.1" height="36.2" rx="3" fill="#999999" stroke="#111" stroke-opacity="0.35" stroke-width="1.2"/>
<text transform="translate(1024.80,1163.50) scale(0.9000,1)" font-size="11" fill="#2a2a2a" text-anchor="middle">60</text>
<rect x="1089.1" y="1107.8" width="125.3" height="62" rx="5" fill="url(#g46)"/>
<rect x="1094.3" y="1112.8" width="115.1" height="36.2" rx="3" fill="#b2b2b2" stroke="#111" stroke-opacity="0.35" stroke-width="1.2"/>
<text transform="translate(1151.70,1163.50) scale(0.9000,1)" font-size="11" fill="#2a2a2a" text-anchor="middle">70</text>
<rect x="1216.0" y="1107.8" width="125.3" height="62" rx="5" fill="url(#g46)"/>
<rect x="1221.2" y="1112.8" width="115.1" height="36.2" rx="3" fill="#cccccc" stroke="#111" stroke-opacity="0.35" stroke-width="1.2"/>
<text transform="translate(1278.60,1163.50) scale(0.9000,1)" font-size="11" fill="#2a2a2a" text-anchor="middle">80</text>
<rect x="1342.9" y="1107.8" width="125.3" height="62" rx="5" fill="url(#g47)"/>
<rect x="1348.1" y="1112.8" width="115.1" height="36.2" rx="3" fill="#e6e6e6" stroke="#000" stroke-opacity="0.35" stroke-width="1.2"/>
<text transform="translate(1405.50,1163.80) scale(0.9000,1)" font-size="11" fill="#ffffff" text-anchor="middle" font-weight="bold">90</text>
<rect x="1469.8" y="1107.8" width="125.3" height="62" rx="5" fill="url(#g46)"/>
<rect x="1475.0" y="1112.8" width="115.1" height="36.2" rx="3" fill="#ffffff" stroke="#111" stroke-opacity="0.35" stroke-width="1.2"/>
<text transform="translate(1532.40,1163.50) scale(0.9000,1)" font-size="11" fill="#2a2a2a" text-anchor="middle">100</text>
<rect x="1596" y="1107" width="324" height="63" fill="#262626"/>
<path d="M1597 1125.8 V1111 Q1597 1107.7 1600.3 1107.7 H1641.4 Q1644.7 1107.7 1644.7 1111 V1125.8 Z" fill="url(#g48)"/>
<path d="M1597 1126.8 H1644.7 V1165.5 Q1644.7 1168.8 1641.4 1168.8 H1600.3 Q1597 1168.8 1597 1165.5 Z" fill="url(#g48)"/>
<circle cx="1621" cy="1116.6" r="7.2" fill="url(#g49)"/>
<path d="M1616.5 1119 H1625.5 L1621 1113.6 Z" fill="#222"/>
<rect x="1606.5" y="1133.2" width="29" height="29" rx="4" fill="none" stroke="#2a2a2a" stroke-width="3"/>
<rect x="1614" y="1141" width="13.5" height="13" fill="#000"/>
<rect x="1646.4" y="1107.7" width="225.5" height="30.1" rx="3" fill="url(#g48)"/>
<line x1="1692.3" y1="1107.7" x2="1692.3" y2="1137.8" stroke="#3a3a3a" stroke-width="1"/>
<line x1="1737.3" y1="1107.7" x2="1737.3" y2="1137.8" stroke="#3a3a3a" stroke-width="1"/>
<line x1="1782.5" y1="1107.7" x2="1782.5" y2="1137.8" stroke="#3a3a3a" stroke-width="1"/>
<line x1="1827.5" y1="1107.7" x2="1827.5" y2="1137.8" stroke="#3a3a3a" stroke-width="1"/>
<circle cx="1668.7" cy="1122.7" r="10" fill="url(#g49)"/>
<circle cx="1715" cy="1122.7" r="10" fill="url(#g49)"/>
<circle cx="1759.8" cy="1122.7" r="10" fill="url(#g49)"/>
<circle cx="1804.8" cy="1122.7" r="10" fill="url(#g49)"/>
<circle cx="1849.5" cy="1122.7" r="10" fill="url(#g49)"/>
<rect x="1665" y="1119" width="7.5" height="7.5" fill="#222"/>
<path d="M1712.2 1117.6 L1720 1122.8 L1712.2 1128 Z" fill="#222"/>
<path d="M1755.5 1117.5 H1754 V1128 H1755.5 M1764 1117.5 H1765.5 V1128 H1764" fill="none" stroke="#222" stroke-width="1.6"/>
<circle cx="1758.2" cy="1122.8" r="0.9" fill="#222"/><circle cx="1761.4" cy="1122.8" r="0.9" fill="#222"/>
<path d="M1804.8 1122.7 C1802 1119.5 1798.5 1119.5 1798.5 1122.7 C1798.5 1125.9 1802 1125.9 1804.8 1122.7 C1807.6 1119.5 1811.1 1119.5 1811.1 1122.7 C1811.1 1125.9 1807.6 1125.9 1804.8 1122.7 Z" fill="none" stroke="#222" stroke-width="1.6"/>
<path d="M1844.5 1121.5 A5.2 5.2 0 0 1 1854 1120 M1854.5 1124 A5.2 5.2 0 0 1 1845 1125.5" fill="none" stroke="#222" stroke-width="1.8"/>
<path d="M1855.5 1117 V1121.5 H1851 Z M1843.5 1128.5 V1124 H1848 Z" fill="#222"/>
<rect x="1872" y="1107.7" width="48" height="30.1" fill="#232323"/>
<circle cx="1896" cy="1123.2" r="10" fill="#303030"/>
<rect x="1646.4" y="1139.2" width="272" height="29.6" rx="3" fill="url(#g48)"/>
<line x1="1782.2" y1="1139.2" x2="1782.2" y2="1168.8" stroke="#3a3a3a" stroke-width="1"/>
<circle cx="1676.8" cy="1154.1" r="9.8" fill="url(#g49)"/>
<circle cx="1890" cy="1154.1" r="9.8" fill="url(#g49)"/>
<path d="M1676 1150 L1672.5 1154.1 L1676 1158.2 M1680 1150 L1676.5 1154.1 L1680 1158.2" fill="none" stroke="#222" stroke-width="1.6"/>
<path d="M1887 1150 L1890.5 1154.1 L1887 1158.2 M1891 1150 L1894.5 1154.1 L1891 1158.2" fill="none" stroke="#222" stroke-width="1.6"/>
<text transform="translate(1701.94,1161.50) scale(0.9913,1)" font-size="22" fill="#2a2a2a" font-weight="bold">Back</text>
<text transform="translate(1808.86,1161.50) scale(1.1122,1)" font-size="22" fill="#2a2a2a" font-weight="bold">Next</text>
<rect x="200" y="646" width="1" height="524" fill="#232323"/>
<rect x="200" y="88" width="1" height="558" fill="#2a2a2a"/>
<rect x="1919" y="88" width="1" height="1019" fill="#262626"/>
</svg>
</body></html>
